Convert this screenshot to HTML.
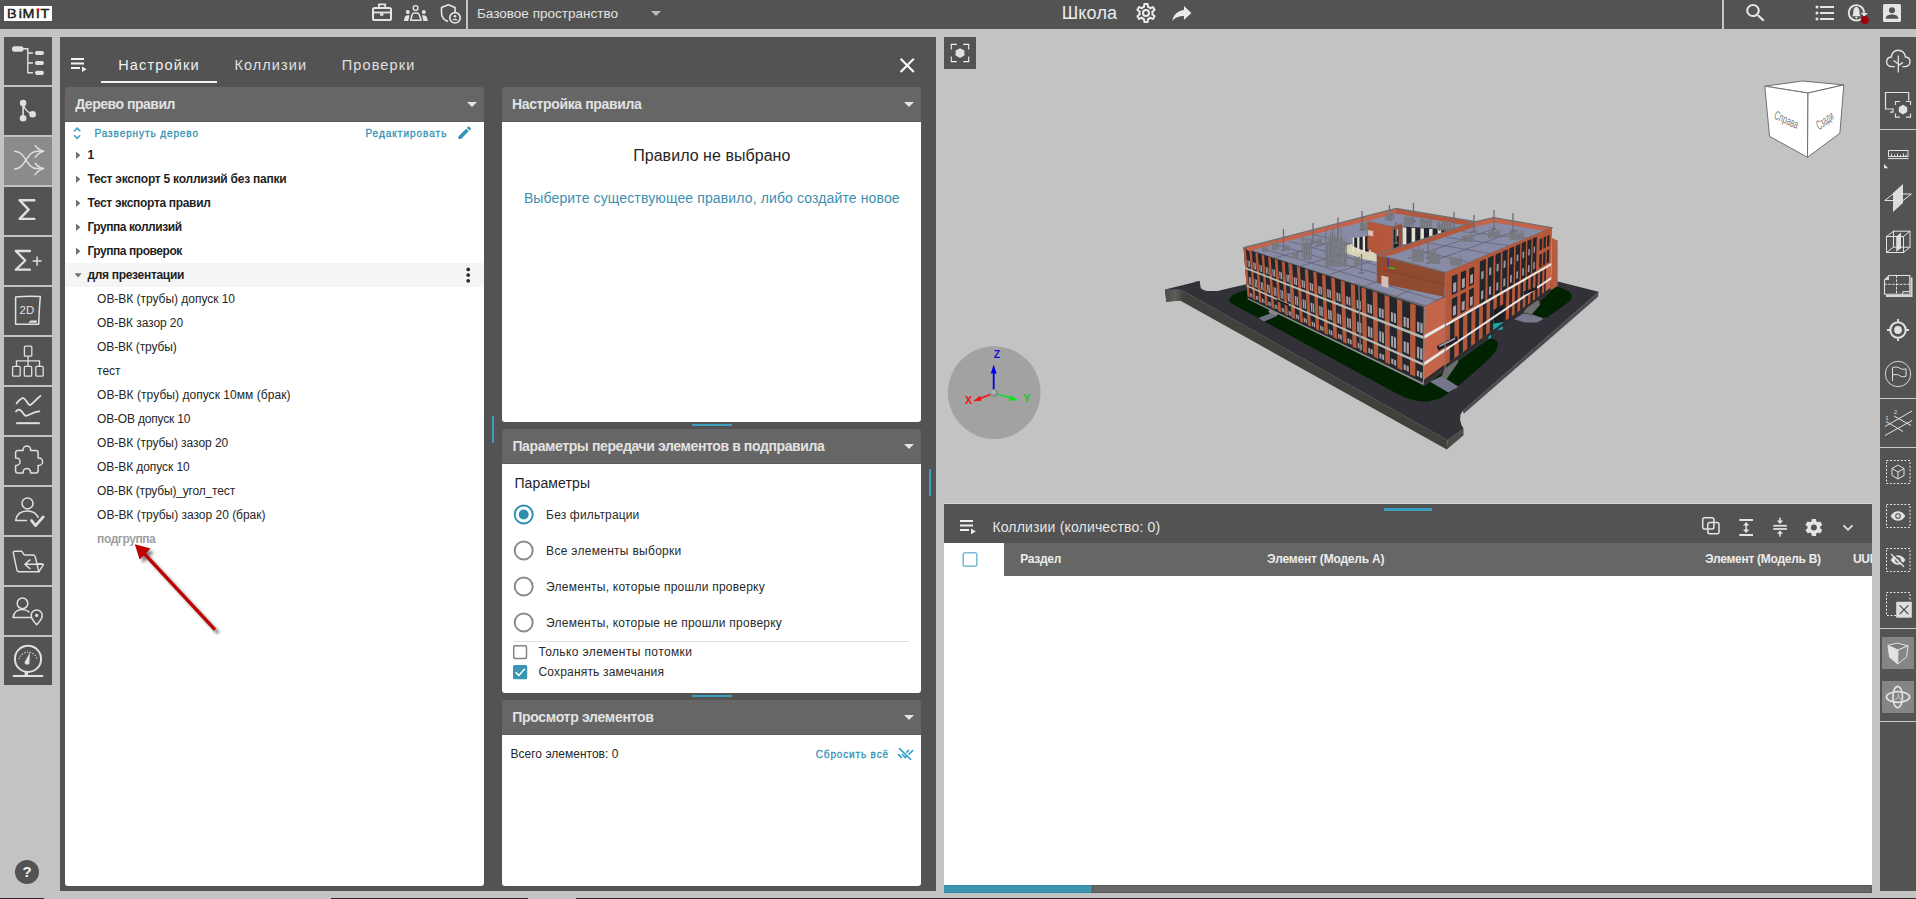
<!DOCTYPE html>
<html lang="ru">
<head>
<meta charset="utf-8">
<title>BIMIT</title>
<style>
html,body{margin:0;padding:0;}
body{width:1916px;height:899px;overflow:hidden;background:#c3c3c3;font-family:"Liberation Sans",sans-serif;}
#app{position:relative;width:1916px;height:899px;overflow:hidden;background:#c3c3c3;}
#app div,#app span,#app svg{position:absolute;box-sizing:border-box;}
.t{white-space:nowrap;display:block;}
.dk{background:#535353;}
.hd{background:#666666;border-radius:3px 3px 0 0;border-bottom:1px solid #5a5a5a;}
.wh{background:#fff;border-radius:0 0 3px 3px;}
.sb{left:4px;width:48px;height:48px;background:#535353;}
.bl{background:#3c9dbd;}
.sep{left:1880px;width:36px;height:1px;background:#c9c9c9;}
svg{overflow:visible;}
</style>
</head>
<body>
<div id="app">
<!-- top bar -->
<div class="dk" style="left:0;top:0;width:1916px;height:29px;"></div>
<div style="left:466px;top:0;width:2px;height:29px;background:#c6c6c6;"></div>
<div style="left:1722px;top:0;width:2px;height:29px;background:#c6c6c6;"></div>
<!-- left sidebar buttons -->
<div class="sb" style="top:37px;"></div>
<div class="sb" style="top:87px;"></div>
<div class="sb" style="top:137px;background:#8b8b8b;"></div>
<div class="sb" style="top:187px;"></div>
<div class="sb" style="top:237px;"></div>
<div class="sb" style="top:287px;"></div>
<div class="sb" style="top:337px;"></div>
<div class="sb" style="top:387px;"></div>
<div class="sb" style="top:437px;"></div>
<div class="sb" style="top:487px;"></div>
<div class="sb" style="top:537px;"></div>
<div class="sb" style="top:587px;"></div>
<div class="sb" style="top:637px;"></div>
<!-- main left panel -->
<div class="dk" style="left:60px;top:37px;width:876px;height:854px;"></div>
<div style="left:101px;top:81px;width:116px;height:2px;background:#f2f2f2;"></div>
<!-- tree card -->
<div class="hd" style="left:65px;top:87px;width:419px;height:35px;"></div>
<div class="wh" style="left:65px;top:122px;width:419px;height:764px;"></div>
<div style="left:65px;top:263px;width:419px;height:24px;background:#f5f5f5;"></div>
<!-- card 1 -->
<div class="hd" style="left:502px;top:87px;width:419px;height:35px;"></div>
<div class="wh" style="left:502px;top:122px;width:419px;height:300px;"></div>
<!-- card 2 -->
<div class="hd" style="left:502px;top:429px;width:419px;height:35px;"></div>
<div class="wh" style="left:502px;top:464px;width:419px;height:229px;"></div>
<div style="left:514px;top:641px;width:395px;height:1px;background:#dedede;"></div>
<!-- card 3 -->
<div class="hd" style="left:502px;top:700px;width:419px;height:35px;"></div>
<div class="wh" style="left:502px;top:735px;width:419px;height:151px;"></div>
<!-- splitter handles -->
<div class="bl" style="left:692px;top:424px;width:40px;height:2px;"></div>
<div class="bl" style="left:692px;top:695px;width:40px;height:2px;"></div>
<div class="bl" style="left:492px;top:416px;width:2px;height:27px;"></div>
<div class="bl" style="left:929px;top:469px;width:2px;height:27px;"></div>
<!-- collisions panel -->
<div style="left:944px;top:503px;width:928px;height:1px;background:#d6d6d6;"></div>
<div class="dk" style="left:944px;top:504px;width:928px;height:39px;"></div>
<div style="left:944px;top:543px;width:928px;height:342px;background:#fff;"></div>
<div style="left:1004px;top:543px;width:868px;height:33px;background:#666666;"></div>
<div class="bl" style="left:1384px;top:508px;width:48px;height:3px;"></div>
<div style="left:944px;top:885px;width:148px;height:8px;background:#3d95b2;border:1px solid #2f88a7;border-left:none;"></div>
<div style="left:1092px;top:885px;width:780px;height:8px;background:#676767;border:1px solid #5a5a5a;"></div>
<!-- right toolbar -->
<div class="dk" style="left:1880px;top:37px;width:36px;height:854px;"></div>
<div class="sep" style="top:129px;"></div>
<div class="sep" style="top:398px;"></div>
<div class="sep" style="top:447px;"></div>
<div class="sep" style="top:628px;"></div>
<div class="sep" style="top:721px;"></div>
<div style="left:1882px;top:637px;width:32px;height:32px;background:#858585;"></div>
<div style="left:1882px;top:681px;width:32px;height:32px;background:#858585;"></div>
<!-- viewport fit button -->
<div class="dk" style="left:944px;top:37px;width:32px;height:32px;"></div>
<!-- bottom line -->
<div style="left:0;top:898px;width:44px;height:1px;background:#2a2a2a;"></div>
<div style="left:331px;top:898px;width:197px;height:1px;background:#2a2a2a;"></div>
<div style="left:576px;top:898px;width:1340px;height:1px;background:#2a2a2a;"></div>

<!-- left sidebar icons -->
<svg style="left:4px;top:37px" width="48" height="48" viewBox="0 0 48 48" fill="none" stroke="#e0e0e0" stroke-width="1.4">
<rect x="8" y="9.3" width="11.6" height="5.4" rx="2.7" fill="#e0e0e0" stroke="none"/>
<path d="M19 11.7H23.8V35.8H28.9M23.8 16H28.9M23.8 26H28.9"/>
<rect x="30.9" y="14" width="9.1" height="4.1" rx="2.05" fill="#e0e0e0" stroke="none"/>
<rect x="30.9" y="24" width="9.1" height="4.1" rx="2.05" fill="#e0e0e0" stroke="none"/>
<rect x="30.9" y="33.8" width="9.1" height="4.1" rx="2.05" fill="#e0e0e0" stroke="none"/>
</svg>
<svg style="left:4px;top:87px" width="48" height="48" viewBox="0 0 48 48" fill="none" stroke="#e0e0e0" stroke-width="1.6">
<circle cx="19.1" cy="16" r="3.3" fill="#e0e0e0" stroke="none"/>
<circle cx="19.1" cy="31.3" r="3.3" fill="#e0e0e0" stroke="none"/>
<circle cx="28.6" cy="27.2" r="3.3" fill="#e0e0e0" stroke="none"/>
<path d="M19.1 16V31.3M19.1 16C20 22 23.5 25.5 28.6 27.2"/>
</svg>
<svg style="left:4px;top:137px" width="48" height="48" viewBox="0 0 48 48" fill="none" stroke="#dedede" stroke-width="1.5" stroke-linecap="round">
<path d="M10.6 14.2C22 14.2 22 31.8 33 31.6H39.6M10.6 31.9C22 31.9 22 14.2 33 14.2H39.6"/>
<path d="M31.2 8.8C33.5 11.8 36 13.4 39.8 14.2C36 15 33.5 17 31.2 20.2M31.2 26.2C33.5 29.2 36 30.8 39.8 31.6C36 32.4 33.5 34.4 31.2 37.6"/>
</svg>
<svg style="left:4px;top:187px" width="48" height="48" viewBox="0 0 48 48" fill="none" stroke="#e0e0e0" stroke-width="2.4" stroke-linecap="round" stroke-linejoin="round">
<path d="M30.3 13.2H15.6L24.6 22.6L15.6 31.9H30.3"/>
</svg>
<svg style="left:4px;top:237px" width="48" height="48" viewBox="0 0 48 48" fill="none" stroke="#e0e0e0" stroke-width="2.3" stroke-linecap="round" stroke-linejoin="round">
<path d="M26 14H11.8L21.2 23.5L11.8 32.7H26"/>
<path d="M28.6 24.1H37.6M33.1 19.6V28.8" stroke-width="1.5" stroke-linecap="butt"/>
</svg>
<svg style="left:4px;top:287px" width="48" height="48" viewBox="0 0 48 48" fill="none" stroke="#e0e0e0" stroke-width="1.5" stroke-linejoin="round">
<path d="M11.6 9.9C20 9.2 28 9 36.4 9.6C35.4 18 35 28 34.7 37.2H11.6Z"/>
<path d="M24.4 35.8L26.4 33.5H32.8V35.8Z" fill="#e0e0e0" stroke="none"/>
<text x="15.6" y="26.8" font-family="Liberation Sans, sans-serif" font-size="11.5" fill="#e0e0e0" stroke="none" textLength="14.6" lengthAdjust="spacingAndGlyphs">2D</text>
</svg>
<svg style="left:4px;top:337px" width="48" height="48" viewBox="0 0 48 48" fill="none" stroke="#e0e0e0" stroke-width="1.3">
<rect x="20.4" y="9.2" width="7.4" height="10" rx="1"/>
<rect x="8.6" y="29.4" width="7.6" height="9.8" rx="1"/>
<rect x="20.3" y="29.4" width="7.4" height="9.8" rx="1"/>
<rect x="31.8" y="29.4" width="7.4" height="9.8" rx="1"/>
<path d="M24.1 19.2V29.4M12.5 29.4V23.8H35.5V29.4"/>
</svg>
<svg style="left:4px;top:387px" width="48" height="48" viewBox="0 0 48 48" fill="none" stroke="#e0e0e0" stroke-width="1.8" stroke-linecap="round" stroke-linejoin="round">
<path d="M12.6 16.3C15 13.5 17 11 19.4 11.2C22 11.6 23.5 17.8 25.8 18C28 18 32 12 36.4 9"/>
<path d="M12 24.6C13 23 14.5 22.3 16 22.8C18 23.6 19.6 28.8 22 28.9C25 28.8 29 24.6 35.4 24.4"/>
<path d="M12.2 36.2H35.8" stroke-linecap="butt" stroke-width="2"/>
</svg>
<svg style="left:4px;top:437px" width="48" height="48" viewBox="0 0 48 48" fill="none" stroke="#e0e0e0" stroke-width="1" stroke-linejoin="round">
<g transform="translate(7.1 4.4) scale(1.5)">
<path d="M3 7.5a1.5 1.5 0 0 1 1.5-1.5H8V5.5a2.5 2.5 0 0 1 5 0V6H16.5a1.5 1.5 0 0 1 1.5 1.5V11H18.5a2.5 2.5 0 0 1 0 5H18V19.5a1.5 1.5 0 0 1-1.5 1.5H13V20.5a2.5 2.5 0 0 0-5 0V21H4.5a1.5 1.5 0 0 1-1.5-1.5V16H3.5a2.5 2.5 0 0 0 0-5H3Z"/>
</g>
</svg>
<svg style="left:4px;top:487px" width="48" height="48" viewBox="0 0 48 48" fill="none" stroke="#e0e0e0" stroke-width="1.5" stroke-linecap="round" stroke-linejoin="round">
<circle cx="23.5" cy="16.4" r="5.5"/>
<path d="M22.4 33.5H11.6C12.5 27 17 23.9 23.4 23.9C28.5 23.9 32.5 26.6 34.2 30.4"/>
<path d="M27.6 33.6L31.6 38.6L39.2 29.9" stroke-width="2.8"/>
</svg>
<svg style="left:4px;top:537px" width="48" height="48" viewBox="0 0 48 48" fill="none" stroke="#e0e0e0" stroke-width="1.4" stroke-linecap="round" stroke-linejoin="round">
<path d="M9.2 15.4C9.2 14.6 9.8 14.4 11 14.3H17.4C18.6 14.4 19.4 17.8 20.8 18H29.6C30.6 18.2 31 19 31.4 20.5L34.8 34.8H14.8C13.8 34.8 13.2 34 12.9 33L9.2 15.4Z"/>
<path d="M34.8 34.8L39.2 28.2C39.5 27.4 39 27 38 26.9L32.6 26.7"/>
<path d="M38.4 27.3H21M26 22.9L20.8 27.3L26 31.6"/>
</svg>
<svg style="left:4px;top:587px" width="48" height="48" viewBox="0 0 48 48" fill="none" stroke="#e0e0e0" stroke-width="1.5" stroke-linecap="round" stroke-linejoin="round">
<circle cx="18.5" cy="16.4" r="5.3"/>
<path d="M26.4 30.5H9C10 25.5 13.5 22.6 18 22.6C21 22.6 23.4 23.6 25 25"/>
<path d="M32.7 37.6C29.5 34.4 27.2 31.6 27.2 28.4A5.5 5.5 0 0 1 38.2 28.4C38.2 31.6 35.9 34.4 32.7 37.6Z"/>
<circle cx="32.7" cy="28.4" r="1.6" fill="#e0e0e0" stroke="none"/>
</svg>
<svg style="left:4px;top:637px" width="48" height="48" viewBox="0 0 48 48" fill="none" stroke="#e0e0e0" stroke-width="2">
<circle cx="24" cy="21.9" r="13.1"/>
<path d="M22.3 35V38.5" stroke-width="3.4"/>
<path d="M8.8 39H39.2" stroke-width="2.1"/>
<path d="M14.9 22.2A9.4 9.4 0 0 1 33.1 22.2" stroke-width="1.3" stroke-dasharray="1.3 1.5" stroke="#cfcfcf"/>
<path d="M25.9 15.2L25.4 26.6C25 28.3 21 28 20.4 25.8Z" fill="#e0e0e0" stroke="none"/>
</svg>
<!-- help button -->
<div style="left:15px;top:860px;width:24px;height:24px;border-radius:12px;background:#535353;"></div>
<span class="t" style="left:22.4px;top:864px;font-size:15px;line-height:16px;font-weight:700;color:#f4f4f4;">?</span>

<!-- logo -->
<div style="left:4px;top:6px;width:48px;height:15px;background:#fff;"></div>
<svg style="left:4px;top:6px" width="48" height="15" viewBox="0 0 48 15">
<g transform="scale(1.2 1)"><text x="2.45 12.35 15.4 26.9 30.5" y="11.8" font-family="Liberation Sans, sans-serif" font-size="12" fill="#1c1c1c" stroke="#1c1c1c" stroke-width=".42">BiMiT</text></g>
<rect x="32.6" y="2.6" width="2.7" height="2.3" fill="#ff0000"/>
<rect x="5.9" y="3.4" width=".9" height="8" fill="#fff"/>
</svg>
<!-- briefcase -->
<svg style="left:360px;top:0" width="120" height="29" viewBox="360 0 120 29" fill="none" stroke="#e4e4e4">
<rect x="373" y="7.9" width="18" height="12.1" rx="1.6" stroke-width="2"/>
<path d="M378.9 7.9V4.4H385.2V7.9" stroke-width="1.8" stroke-linejoin="round"/>
<path d="M373 12.5H391" stroke-width="1.8"/>
<rect x="380" y="13.2" width="3.4" height="2.5" fill="#e4e4e4" stroke="none"/>
<!-- group -->
<circle cx="415.6" cy="8" r="2.4" stroke-width="1.4"/>
<circle cx="407.8" cy="11.9" r="2" fill="#e4e4e4" stroke="none"/>
<circle cx="423.8" cy="11.9" r="2" fill="#e4e4e4" stroke="none"/>
<path d="M410.6 20.3L412.2 14.6C412.6 13.4 413.4 13 414.4 13H416.9C417.9 13 418.7 13.4 419.1 14.6L421.2 20.3Z" stroke-width="1.5" stroke-linejoin="round"/>
<path d="M403.8 20.9L404.8 17C405.3 15.6 407 15.2 409.6 15.2L408.2 20.9Z" fill="#e4e4e4" stroke="none"/>
<path d="M427.8 20.9L426.8 17C426.3 15.6 424.6 15.2 422 15.2L423.4 20.9Z" fill="#e4e4e4" stroke="none"/>
<!-- shield -->
<path d="M455.1 12V7.6L448.3 4.7L441.5 7.6V12.4C441.5 16.8 444.2 20 448 21.4" stroke-width="1.6" stroke-linejoin="round"/>
<circle cx="455" cy="17.8" r="5.2" stroke-width="1.7" fill="#535353"/>
<circle cx="455" cy="16.2" r="1.25" fill="#e4e4e4" stroke="none"/>
<path d="M452.5 20.2C452.5 18.2 457.5 18.2 457.5 20.2Z" fill="#e4e4e4" stroke="none"/>
</svg>
<!-- workspace dropdown triangle -->
<svg style="left:651px;top:11px" width="10" height="5" viewBox="0 0 10 5"><path d="M0 0H10L5 5Z" fill="#bcbcbc"/></svg>
<!-- gear outline -->
<svg style="left:1134px;top:1px" width="24" height="24" viewBox="0 0 24 24"><path fill="#ececec" d="M12,8A4,4 0 0,1 16,12A4,4 0 0,1 12,16A4,4 0 0,1 8,12A4,4 0 0,1 12,8M12,10A2,2 0 0,0 10,12A2,2 0 0,0 12,14A2,2 0 0,0 14,12A2,2 0 0,0 12,10M10,22C9.75,22 9.54,21.82 9.5,21.58L9.13,18.93C8.5,18.68 7.96,18.34 7.44,17.94L4.95,18.95C4.73,19.03 4.46,18.95 4.34,18.73L2.34,15.27C2.21,15.05 2.27,14.78 2.46,14.63L4.57,12.97L4.5,12L4.57,11L2.46,9.37C2.27,9.22 2.21,8.95 2.34,8.73L4.34,5.27C4.46,5.05 4.73,4.96 4.95,5.05L7.44,6.05C7.96,5.66 8.5,5.32 9.13,5.07L9.5,2.42C9.54,2.18 9.75,2 10,2H14C14.25,2 14.46,2.18 14.5,2.42L14.87,5.07C15.5,5.32 16.04,5.66 16.56,6.05L19.05,5.05C19.27,4.96 19.54,5.05 19.66,5.27L21.66,8.73C21.79,8.95 21.73,9.22 21.54,9.37L19.43,11L19.5,12L19.43,13L21.54,14.63C21.73,14.78 21.79,15.05 21.66,15.27L19.66,18.73C19.54,18.95 19.27,19.04 19.05,18.95L16.56,17.95C16.04,18.34 15.5,18.68 14.87,18.93L14.5,21.58C14.46,21.82 14.25,22 14,22H10M11.25,4L10.88,6.61C9.68,6.86 8.62,7.5 7.85,8.39L5.44,7.35L4.69,8.65L6.8,10.2C6.4,11.37 6.4,12.64 6.8,13.8L4.68,15.36L5.43,16.66L7.86,15.62C8.63,16.5 9.68,17.14 10.87,17.38L11.24,20H12.76L13.13,17.39C14.32,17.14 15.37,16.5 16.14,15.62L18.57,16.66L19.32,15.36L17.2,13.81C17.6,12.64 17.6,11.37 17.2,10.2L19.31,8.65L18.56,7.35L16.15,8.39C15.38,7.5 14.32,6.86 13.12,6.62L12.75,4H11.25Z"/></svg>
<!-- share -->
<svg style="left:1169px;top:0.6px" width="26" height="24" viewBox="0 0 26 24"><path transform="scale(1.067 1)" fill="#ececec" d="M21,12L14,5V9C7,10 4,15 3,20C5.5,16.5 9,14.9 14,14.9V19L21,12Z"/></svg>
<!-- search -->
<svg style="left:1743.4px;top:1.2px" width="26" height="26" viewBox="0 0 26 26"><path transform="scale(1.05 1)" fill="#e6e6e6" d="M9.5,3A6.5,6.5 0 0,1 16,9.5C16,11.11 15.41,12.59 14.44,13.73L14.71,14H15.5L20.5,19L19,20.5L14,15.5V14.71L13.73,14.44C12.59,15.41 11.11,16 9.5,16A6.5,6.5 0 0,1 3,9.5A6.5,6.5 0 0,1 9.5,3M9.5,5C7,5 5,7 5,9.5C5,12 7,14 9.5,14C12,14 14,12 14,9.5C14,7 12,5 9.5,5Z"/></svg>
<!-- list -->
<svg style="left:1812.5px;top:0.6px" width="24" height="24" viewBox="0 0 24 24"><path fill="#e6e6e6" d="M7,5H21V7H7V5M7,13V11H21V13H7M4,4.5A1.5,1.5 0 0,1 5.5,6A1.5,1.5 0 0,1 4,7.5A1.5,1.5 0 0,1 2.5,6A1.5,1.5 0 0,1 4,4.5M4,10.5A1.5,1.5 0 0,1 5.5,12A1.5,1.5 0 0,1 4,13.5A1.5,1.5 0 0,1 2.5,12A1.5,1.5 0 0,1 4,10.5M7,19V17H21V19H7M4,16.5A1.5,1.5 0 0,1 5.5,18A1.5,1.5 0 0,1 4,19.5A1.5,1.5 0 0,1 2.5,18A1.5,1.5 0 0,1 4,16.5Z"/></svg>
<!-- bell / user -->
<svg style="left:1840px;top:0" width="76" height="29" viewBox="1840 0 76 29" fill="none">
<path d="M1864.1 12.600A7.700 7.700 0 1 0 1861.500 18.600" stroke="#e6e6e6" stroke-width="1.900"/>
<path d="M1860.600 12.700L1867.800 13.100L1864.200 16.500Z" fill="#e6e6e6"/>
<path d="M1851.900 16.200C1853.300 15 1853.300 13.400 1853.300 11.600C1853.300 8.800 1854.600 7 1856.400 6.800C1858.200 7 1859.500 8.800 1859.500 11.600C1859.500 13.400 1859.500 15 1860.900 16.200Z" fill="#e6e6e6"/>
<circle cx="1856.400" cy="17.500" r="1.100" fill="#e6e6e6"/>
<circle cx="1864.8" cy="20" r="4" fill="#a0000c"/>
<rect x="1883" y="4" width="18" height="18" rx="1.6" fill="#e4e4e4"/>
<circle cx="1892" cy="10.2" r="3" fill="#535353"/>
<path d="M1885.8 18.8C1885.8 15 1889.5 14.4 1892 14.4C1894.500 14.4 1898.200 15 1898.200 18.800Z" fill="#535353"/>
</svg>

<!-- right toolbar icons -->
<svg style="left:1880px;top:37px" width="36" height="690" viewBox="1880 37 36 690" fill="none" stroke="#e2e2e2" stroke-width="1.2">
<!-- cloud tree -->
<path d="M1894.800 66.600H1891.600C1888.600 66.600 1886.600 64.400 1886.600 61.800C1886.600 59 1888.800 57.200 1891.400 57C1891.600 53 1894.600 50.200 1898.300 50.200C1902 50.200 1905 53 1905.400 57C1908 57.200 1910 59.200 1910 61.800C1910 64.400 1908 66.600 1905 66.600H1902.400" stroke-width="1.400"/>
<path d="M1898.300 55.500V72.600M1893.500 60.400L1898.300 64M1898.300 65.600L1903 62.400" stroke-width="1.300"/>
<!-- screen focus -->
<path d="M1908.700 100.500V92.500H1885.500V109H1893V112.200H1890"/>
<path d="M1895.500 105V101.500H1900M1906 101.500H1910.500V105M1910.500 113.500V117.200H1906M1900 117.200H1895.500V113.500"/>
<path d="M1903 104.800L1907.200 107.200V112L1903 114.400L1898.800 112V107.200Z" fill="#e2e2e2" stroke="none"/>
<!-- ruler -->
<rect x="1888.500" y="150.500" width="19.500" height="6" stroke-width="1"/>
<path d="M1891.500 156.500V153.500M1894.500 156.500V154.500M1897.500 156.500V153.500M1900.500 156.500V154.500M1903.500 156.500V153.500M1906 156.500V154.500" stroke-width="1"/>
<path d="M1888 158.600H1908.500" stroke-width="1"/>
<path d="M1884 164V168.200H1888.200Z" fill="#e8e8e8" stroke="none"/>
<!-- section plane -->
<path d="M1903 184V203L1893 212V193Z" fill="#dcdcdc" stroke="none"/>
<path d="M1884.800 200.500L1893.200 194H1911.400L1903 200.500Z" stroke-width="1"/>
<!-- section box -->
<path d="M1896.200 251.800V236.500L1901 232.500V248.200Z" fill="#dcdcdc" stroke="none"/>
<g stroke-width="1"><rect x="1886.500" y="236.500" width="17" height="16"/><rect x="1893.500" y="231.200" width="16.500" height="16"/>
<path d="M1886.500 236.500L1893.500 231.200M1903.500 236.500L1910 231.200M1886.500 252.500L1893.500 247.200M1903.500 252.500L1910 247.200"/></g>
<!-- floor plan -->
<path d="M1886 296H1911.500V277.500" stroke-width="2" stroke="#d6d6d6"/>
<path d="M1889 275.500H1909.800V294.200H1884.500V280Z" stroke-width="1.100" fill="#535353"/>
<path d="M1884.500 280H1889V275.500Z" fill="#d6d6d6" stroke="none"/>
<path d="M1896.500 275.500V294.200M1884.500 284.300H1909.800" stroke-width="1" stroke-dasharray="2.600 1.200"/>
<path d="M1902.800 294.200V291.600H1909.800" stroke-width="1"/>
<!-- target -->
<circle cx="1898" cy="330" r="7.700" stroke-width="2"/>
<circle cx="1898" cy="330" r="3.900" fill="#e2e2e2" stroke="none"/>
<path d="M1898 319V322M1898 338V341M1887 330H1890M1906 330H1909" stroke-width="1.800"/>
<!-- flag -->
<circle cx="1898" cy="374" r="12.700" stroke-width=".9"/>
<path d="M1892.500 381V367.600C1896 366.600 1898 367 1899.800 368.200C1901.600 369.400 1903.600 369.600 1906 368.800V376.300C1903.600 377.100 1901.600 376.900 1899.800 375.700C1898 374.500 1896 374.100 1892.500 375.100" stroke-width="1"/>
<!-- grid lines -->
<path d="M1885 426.500L1912 411M1885 435.500L1912 420.500M1886 421.500L1903 431.500M1894 416L1911 425.500" stroke-width="1"/>
<text x="1885.400" y="419.800" font-family="Liberation Sans, sans-serif" font-size="5.500" fill="#e2e2e2" stroke="none">1</text>
<text x="1894" y="413.600" font-family="Liberation Sans, sans-serif" font-size="5.500" fill="#e2e2e2" stroke="none">2</text>
<!-- dashed boxes -->
<g stroke-width="1" stroke-dasharray="1.800 1.800" stroke="#f0f0f0">
<rect x="1886.500" y="460.500" width="23.500" height="23"/>
<rect x="1886.500" y="504.500" width="23.500" height="23"/>
<rect x="1886.500" y="548.500" width="23.500" height="23"/>
<path d="M1896 615.500H1886.500V592.500H1910V601.500"/>
</g>
<path d="M1898 465L1904 468.500V475.500L1898 479L1892 475.500V468.500ZM1898 472V479M1898 472L1892 468.500M1898 472L1904 468.500" stroke-width="1"/>
<!-- eye -->
<path d="M1890.600 516C1893 512.600 1895.400 511.200 1898 511.200C1900.600 511.200 1903 512.600 1905.400 516C1903 519.400 1900.600 520.800 1898 520.800C1895.400 520.800 1893 519.400 1890.600 516Z" fill="#e2e2e2" stroke="none"/>
<circle cx="1898" cy="516" r="2.300" fill="#e2e2e2" stroke="#535353" stroke-width="1.100"/>
<!-- eye off -->
<path d="M1890.600 560C1893 556.600 1895.400 555.200 1898 555.200C1900.600 555.200 1903 556.600 1905.400 560C1903 563.400 1900.600 564.800 1898 564.800C1895.400 564.800 1893 563.400 1890.600 560Z" fill="#e2e2e2" stroke="none"/>
<circle cx="1898" cy="560" r="2.300" fill="#e2e2e2" stroke="#535353" stroke-width="1.100"/>
<path d="M1892.300 553.200L1905.300 566" stroke="#535353" stroke-width="1.300"/>
<path d="M1891 554L1904 566.800" stroke="#e2e2e2" stroke-width="1.300"/>
<!-- X box -->
<rect x="1896.200" y="601.800" width="15.600" height="15.900" fill="#dedede" stroke="none"/>
<path d="M1899.600 605.400L1908.400 614.200M1908.400 605.400L1899.600 614.200" stroke="#4a4a4a" stroke-width="1.200"/>
<!-- cube button -->
<path d="M1887.900 645.300L1898 650L1897.700 664L1889.500 657.200Z" fill="#e2e2e2" stroke="#e2e2e2" stroke-width=".8" stroke-linejoin="round"/>
<path d="M1887.900 645.300L1897.400 643.200L1908 645.800L1898 650Z" fill="#7c7c7c" stroke="#e2e2e2" stroke-width="1" stroke-linejoin="round"/>
<path d="M1898 650L1908 645.800L1906.600 656.900L1897.700 664Z" fill="#858585" stroke="#e2e2e2" stroke-width="1" stroke-linejoin="round"/>
<!-- orbit button -->
<ellipse cx="1898" cy="697" rx="11.600" ry="5.300" stroke-width="1.700"/>
<ellipse cx="1897.700" cy="697" rx="4.800" ry="10.600" stroke-width="1.700"/>
<path d="M1898.400 693.800V696.800L1895.400 700M1898.400 696.800L1901.400 700" stroke-width=".8"/>
</svg>

<!-- 3D viewport -->
<svg style="left:944px;top:37px" width="928" height="466" viewBox="944 37 928 466" shape-rendering="geometricPrecision">
<path d="M1165.0 289.6L1166.3 301.7L1180.0 300.5L1446.8 449.4L1447.6 440.2L1182.5 290.6L1179.2 289.6Z" fill="#40413c"/>
<defs><linearGradient id="sg" x1="0" x2="1"><stop offset="0" stop-color="#4a4b47"/><stop offset=".55" stop-color="#5c5d58"/><stop offset="1" stop-color="#40413c"/></linearGradient></defs>
<path d="M1165.0 289.6L1166.3 301.7L1182.0 300.6L1184.0 291.4L1179.2 289.6Z" fill="url(#sg)"/>
<path d="M1446.8 449.4L1447.6 440.2L1463.5 428.5L1463.5 435.2Z" fill="#4a4a46"/>
<path d="M1598.5 291.7L1598.0 296.7L1464.0 413.6L1462.6 411.0Z" fill="#4c4c50"/>
<path d="M1194.2 281.7L1199.7 280.9L1200.5 287.9L1194.8 284.5Z" fill="#5b5b60"/>
<path d="M1165.0 289.6L1199.7 280.9L1200.5 287.9L1203.0 289.8L1206.8 290.9L1217.6 290.9L1230.1 287.9L1246.4 284.2L1556.8 281.3L1598.5 291.7L1462.6 411.0L1460.3 415.0L1460.1 420.2L1461.5 425.0L1463.5 428.5L1447.6 440.2L1182.5 290.6L1179.2 289.6Z" fill="#313137"/>
<path d="M1247.5 289.8L1238.5 292.5L1232.0 295.5L1228.9 299.2L1230.5 302.8L1234.3 305.0L1390.0 390.0L1405.0 397.5L1418.0 401.0L1428.0 401.5L1440.0 398.5L1452.0 391.0L1470.0 376.0L1490.0 358.0L1497.0 349.0L1498.0 343.0L1496.0 340.0L1491.0 338.5L1486.0 341.0L1424.0 386.5Z" fill="#002200"/>
<path d="M1258.5 318.0L1270.0 313.5L1276.0 316.5L1264.0 321.5Z" fill="#6f7082"/>
<path d="M1268.0 311.5L1274.0 307.0L1281.0 310.5L1276.0 316.5L1270.0 313.5Z" fill="#858585"/>
<path d="M1430.0 381.8L1441.8 376.0L1458.5 386.8L1448.4 392.6Z" fill="#75768a"/>
<path d="M1441.8 376.0L1450.5 354.0L1456.5 357.5L1458.5 362.0L1446.0 380.0Z" fill="#6c6c6c"/>
<path d="M1555.9 286.5L1563.0 288.5L1569.0 291.5L1571.8 295.1L1571.0 299.5L1566.0 304.0L1552.0 314.0L1546.7 317.6L1541.0 317.5L1532.6 314.3L1540.0 301.7Z" fill="#002200"/>
<path d="M1514.2 319.3L1523.4 313.4L1533.4 315.1L1541.0 317.5L1543.4 319.3L1536.7 322.6L1525.0 322.6Z" fill="#77788c"/>
<path d="M1532.6 299.2L1539.2 300.9L1540.0 305.1L1531.7 314.3L1523.4 312.6Z" fill="#6e6e6e"/>
<path d="M1243.5 247.6L1424.2 306.3L1423.4 384.2L1247.7 298.7Z" fill="#23272b"/>
<path d="M1243.6 248.6L1245.9 249.4L1249.8 297.5L1247.5 296.5Z" fill="#b4573a"/>
<path d="M1249.4 250.5L1251.7 251.3L1255.6 300.3L1253.2 299.2Z" fill="#b4573a"/>
<path d="M1255.3 252.5L1257.8 253.3L1261.6 303.2L1259.1 302.0Z" fill="#b4573a"/>
<path d="M1261.6 254.6L1264.1 255.4L1267.8 306.2L1265.3 305.0Z" fill="#b4573a"/>
<path d="M1268.1 256.7L1270.7 257.6L1274.3 309.3L1271.6 308.0Z" fill="#b4573a"/>
<path d="M1274.8 258.9L1277.6 259.8L1281.0 312.5L1278.3 311.2Z" fill="#b4573a"/>
<path d="M1281.8 261.2L1284.7 262.2L1288.0 315.9L1285.2 314.5Z" fill="#b4573a"/>
<path d="M1289.2 263.6L1292.2 264.6L1295.4 319.4L1292.4 318.0Z" fill="#b4573a"/>
<path d="M1296.8 266.1L1300.0 267.2L1303.0 323.1L1299.9 321.6Z" fill="#b4573a"/>
<path d="M1304.8 268.7L1308.1 269.8L1310.9 326.9L1307.7 325.3Z" fill="#b4573a"/>
<path d="M1313.2 271.5L1316.6 272.6L1319.3 330.9L1315.9 329.3Z" fill="#b4573a"/>
<path d="M1321.9 274.4L1325.5 275.5L1328.0 335.0L1324.4 333.4Z" fill="#b4573a"/>
<path d="M1331.1 277.4L1334.9 278.6L1337.1 339.4L1333.4 337.6Z" fill="#b4573a"/>
<path d="M1340.7 280.5L1344.7 281.8L1346.7 344.0L1342.8 342.1Z" fill="#b4573a"/>
<path d="M1350.8 283.9L1355.0 285.2L1356.7 348.8L1352.6 346.9Z" fill="#b4573a"/>
<path d="M1361.5 287.3L1365.9 288.8L1367.2 353.9L1362.9 351.8Z" fill="#b4573a"/>
<path d="M1372.7 291.0L1377.3 292.5L1378.3 359.2L1373.8 357.0Z" fill="#b4573a"/>
<path d="M1384.5 294.9L1389.4 296.5L1390.0 364.8L1385.2 362.5Z" fill="#b4573a"/>
<path d="M1397.0 299.0L1402.2 300.7L1402.3 370.7L1397.3 368.3Z" fill="#b4573a"/>
<path d="M1410.2 303.3L1415.7 305.1L1415.3 376.9L1410.0 374.4Z" fill="#b4573a"/>
<path d="M1247.4 260.1L1249.7 261.0L1250.2 267.5L1247.9 266.6Z" fill="#a39fa7"/>
<path d="M1248.3 260.5L1248.7 260.6L1249.2 267.2L1248.8 267.0Z" fill="#2c2f34"/>
<path d="M1248.7 276.7L1251.0 277.7L1251.6 285.4L1249.3 284.4Z" fill="#a39fa7"/>
<path d="M1249.6 277.1L1250.0 277.3L1250.7 285.0L1250.3 284.8Z" fill="#2c2f34"/>
<path d="M1250.0 292.8L1252.3 293.9L1252.6 297.7L1250.3 296.6Z" fill="#a39fa7"/>
<path d="M1250.9 293.2L1251.3 293.4L1251.6 297.2L1251.2 297.0Z" fill="#2c2f34"/>
<path d="M1253.2 262.2L1255.6 263.1L1256.1 269.8L1253.7 268.9Z" fill="#a39fa7"/>
<path d="M1254.2 262.6L1254.6 262.8L1255.1 269.4L1254.7 269.3Z" fill="#2c2f34"/>
<path d="M1254.5 279.1L1256.9 280.1L1257.5 288.0L1255.1 287.0Z" fill="#a39fa7"/>
<path d="M1255.5 279.6L1255.9 279.7L1256.5 287.6L1256.1 287.4Z" fill="#2c2f34"/>
<path d="M1255.8 295.5L1258.2 296.6L1258.5 300.5L1256.1 299.3Z" fill="#a39fa7"/>
<path d="M1256.8 295.9L1257.2 296.1L1257.5 300.0L1257.1 299.8Z" fill="#2c2f34"/>
<path d="M1259.3 264.4L1261.8 265.4L1262.3 272.2L1259.8 271.2Z" fill="#a39fa7"/>
<path d="M1260.3 264.8L1260.8 265.0L1261.3 271.8L1260.8 271.6Z" fill="#2c2f34"/>
<path d="M1260.6 281.7L1263.1 282.7L1263.7 290.7L1261.2 289.6Z" fill="#a39fa7"/>
<path d="M1261.6 282.1L1262.1 282.3L1262.6 290.2L1262.2 290.1Z" fill="#2c2f34"/>
<path d="M1261.8 298.3L1264.3 299.4L1264.6 303.4L1262.1 302.2Z" fill="#a39fa7"/>
<path d="M1262.9 298.8L1263.3 299.0L1263.6 302.9L1263.1 302.7Z" fill="#2c2f34"/>
<path d="M1265.6 266.7L1268.2 267.7L1268.7 274.6L1266.1 273.6Z" fill="#a39fa7"/>
<path d="M1266.7 267.1L1267.2 267.3L1267.7 274.2L1267.2 274.0Z" fill="#2c2f34"/>
<path d="M1266.9 284.3L1269.5 285.3L1270.1 293.5L1267.5 292.4Z" fill="#a39fa7"/>
<path d="M1268.0 284.7L1268.4 284.9L1269.0 293.0L1268.5 292.8Z" fill="#2c2f34"/>
<path d="M1268.1 301.2L1270.7 302.4L1271.0 306.4L1268.4 305.2Z" fill="#a39fa7"/>
<path d="M1269.2 301.7L1269.6 301.9L1269.9 305.9L1269.5 305.7Z" fill="#2c2f34"/>
<path d="M1272.2 269.1L1274.9 270.1L1275.4 277.2L1272.7 276.1Z" fill="#a39fa7"/>
<path d="M1273.3 269.5L1273.8 269.7L1274.3 276.7L1273.8 276.6Z" fill="#2c2f34"/>
<path d="M1273.5 287.0L1276.1 288.1L1276.7 296.4L1274.0 295.2Z" fill="#a39fa7"/>
<path d="M1274.6 287.4L1275.0 287.6L1275.6 295.9L1275.1 295.7Z" fill="#2c2f34"/>
<path d="M1274.6 304.2L1277.3 305.5L1277.6 309.6L1274.9 308.3Z" fill="#a39fa7"/>
<path d="M1275.7 304.7L1276.2 305.0L1276.5 309.0L1276.0 308.8Z" fill="#2c2f34"/>
<path d="M1279.1 271.6L1281.9 272.6L1282.4 279.8L1279.6 278.8Z" fill="#a39fa7"/>
<path d="M1280.3 272.0L1280.7 272.2L1281.2 279.4L1280.7 279.2Z" fill="#2c2f34"/>
<path d="M1280.3 289.8L1283.1 291.0L1283.6 299.4L1280.8 298.2Z" fill="#a39fa7"/>
<path d="M1281.4 290.3L1281.9 290.5L1282.5 298.9L1282.0 298.7Z" fill="#2c2f34"/>
<path d="M1281.4 307.4L1284.2 308.7L1284.5 312.8L1281.7 311.5Z" fill="#a39fa7"/>
<path d="M1282.6 307.9L1283.0 308.1L1283.3 312.3L1282.8 312.1Z" fill="#2c2f34"/>
<path d="M1286.2 274.2L1289.2 275.3L1289.6 282.6L1286.7 281.5Z" fill="#a39fa7"/>
<path d="M1287.5 274.6L1288.0 274.8L1288.4 282.1L1287.9 281.9Z" fill="#2c2f34"/>
<path d="M1287.4 292.7L1290.3 294.0L1290.8 302.6L1287.9 301.3Z" fill="#a39fa7"/>
<path d="M1288.6 293.2L1289.1 293.4L1289.6 302.1L1289.1 301.8Z" fill="#2c2f34"/>
<path d="M1288.5 310.7L1291.4 312.0L1291.6 316.3L1288.7 314.9Z" fill="#a39fa7"/>
<path d="M1289.7 311.2L1290.2 311.4L1290.4 315.7L1289.9 315.4Z" fill="#2c2f34"/>
<path d="M1293.7 276.9L1296.8 278.0L1297.2 285.5L1294.1 284.3Z" fill="#a39fa7"/>
<path d="M1295.0 277.3L1295.5 277.5L1295.9 285.0L1295.4 284.8Z" fill="#2c2f34"/>
<path d="M1294.8 295.8L1297.9 297.1L1298.3 305.9L1295.3 304.5Z" fill="#a39fa7"/>
<path d="M1296.1 296.3L1296.6 296.5L1297.1 305.3L1296.5 305.1Z" fill="#2c2f34"/>
<path d="M1295.8 314.1L1298.9 315.5L1299.1 319.8L1296.1 318.4Z" fill="#a39fa7"/>
<path d="M1297.1 314.6L1297.6 314.9L1297.9 319.2L1297.3 319.0Z" fill="#2c2f34"/>
<path d="M1301.5 279.7L1304.7 280.9L1305.1 288.5L1301.9 287.3Z" fill="#a39fa7"/>
<path d="M1302.8 280.2L1303.4 280.4L1303.8 288.0L1303.2 287.8Z" fill="#2c2f34"/>
<path d="M1302.5 299.0L1305.7 300.3L1306.2 309.3L1303.0 307.9Z" fill="#a39fa7"/>
<path d="M1303.8 299.5L1304.4 299.8L1304.9 308.7L1304.3 308.5Z" fill="#2c2f34"/>
<path d="M1303.5 317.6L1306.7 319.1L1306.9 323.5L1303.8 322.0Z" fill="#a39fa7"/>
<path d="M1304.8 318.2L1305.4 318.5L1305.6 322.9L1305.1 322.6Z" fill="#2c2f34"/>
<path d="M1309.6 282.6L1313.0 283.9L1313.4 291.7L1310.0 290.4Z" fill="#a39fa7"/>
<path d="M1311.0 283.1L1311.6 283.4L1312.0 291.1L1311.4 290.9Z" fill="#2c2f34"/>
<path d="M1310.6 302.4L1313.9 303.7L1314.4 312.9L1311.1 311.4Z" fill="#a39fa7"/>
<path d="M1312.0 302.9L1312.6 303.2L1313.0 312.3L1312.4 312.0Z" fill="#2c2f34"/>
<path d="M1311.6 321.4L1314.9 322.9L1315.1 327.4L1311.8 325.8Z" fill="#a39fa7"/>
<path d="M1312.9 322.0L1313.5 322.3L1313.7 326.7L1313.1 326.5Z" fill="#2c2f34"/>
<path d="M1318.2 285.7L1321.7 287.0L1322.0 295.0L1318.5 293.6Z" fill="#a39fa7"/>
<path d="M1319.6 286.3L1320.2 286.5L1320.6 294.4L1320.0 294.2Z" fill="#2c2f34"/>
<path d="M1319.1 305.8L1322.6 307.3L1323.0 316.7L1319.5 315.1Z" fill="#a39fa7"/>
<path d="M1320.5 306.4L1321.1 306.7L1321.5 316.0L1320.9 315.8Z" fill="#2c2f34"/>
<path d="M1319.9 325.2L1323.4 326.9L1323.6 331.5L1320.1 329.8Z" fill="#a39fa7"/>
<path d="M1321.4 325.9L1322.0 326.2L1322.2 330.8L1321.6 330.5Z" fill="#2c2f34"/>
<path d="M1327.1 289.0L1330.8 290.3L1331.1 298.4L1327.4 297.0Z" fill="#a39fa7"/>
<path d="M1328.6 289.5L1329.2 289.7L1329.6 297.9L1328.9 297.6Z" fill="#2c2f34"/>
<path d="M1327.9 309.5L1331.6 311.0L1331.9 320.6L1328.3 319.0Z" fill="#a39fa7"/>
<path d="M1329.4 310.1L1330.0 310.4L1330.4 319.9L1329.8 319.6Z" fill="#2c2f34"/>
<path d="M1328.7 329.3L1332.3 331.0L1332.5 335.7L1328.9 334.0Z" fill="#a39fa7"/>
<path d="M1330.2 330.0L1330.8 330.3L1331.0 335.0L1330.4 334.7Z" fill="#2c2f34"/>
<path d="M1336.4 292.3L1340.3 293.7L1340.6 302.1L1336.7 300.6Z" fill="#a39fa7"/>
<path d="M1338.0 292.9L1338.7 293.2L1339.0 301.5L1338.3 301.2Z" fill="#2c2f34"/>
<path d="M1337.2 313.3L1341.0 314.9L1341.3 324.7L1337.5 323.0Z" fill="#a39fa7"/>
<path d="M1338.8 314.0L1339.4 314.3L1339.8 324.0L1339.1 323.7Z" fill="#2c2f34"/>
<path d="M1337.9 333.6L1341.7 335.3L1341.9 340.1L1338.1 338.3Z" fill="#a39fa7"/>
<path d="M1339.5 334.3L1340.1 334.6L1340.3 339.4L1339.6 339.1Z" fill="#2c2f34"/>
<path d="M1346.2 295.9L1350.3 297.4L1350.5 305.9L1346.5 304.3Z" fill="#a39fa7"/>
<path d="M1347.9 296.5L1348.6 296.7L1348.9 305.2L1348.2 305.0Z" fill="#2c2f34"/>
<path d="M1346.9 317.4L1350.9 319.0L1351.2 329.0L1347.2 327.3Z" fill="#a39fa7"/>
<path d="M1348.6 318.1L1349.3 318.3L1349.5 328.3L1348.8 328.0Z" fill="#2c2f34"/>
<path d="M1347.5 338.1L1351.5 339.9L1351.7 344.8L1347.7 342.9Z" fill="#a39fa7"/>
<path d="M1349.2 338.8L1349.9 339.1L1350.0 344.0L1349.3 343.7Z" fill="#2c2f34"/>
<path d="M1356.6 299.6L1360.8 301.2L1361.0 309.9L1356.8 308.3Z" fill="#a39fa7"/>
<path d="M1358.3 300.2L1359.1 300.5L1359.3 309.2L1358.5 308.9Z" fill="#2c2f34"/>
<path d="M1357.1 321.6L1361.3 323.3L1361.6 333.6L1357.4 331.7Z" fill="#a39fa7"/>
<path d="M1358.8 322.3L1359.6 322.6L1359.8 332.8L1359.1 332.5Z" fill="#2c2f34"/>
<path d="M1357.6 342.7L1361.8 344.7L1361.9 349.7L1357.8 347.7Z" fill="#a39fa7"/>
<path d="M1359.4 343.5L1360.1 343.9L1360.2 348.9L1359.5 348.5Z" fill="#2c2f34"/>
<path d="M1367.4 303.5L1371.9 305.2L1372.1 314.1L1367.6 312.4Z" fill="#a39fa7"/>
<path d="M1369.3 304.2L1370.0 304.5L1370.2 313.4L1369.4 313.1Z" fill="#2c2f34"/>
<path d="M1367.8 326.0L1372.3 327.9L1372.5 338.3L1368.0 336.4Z" fill="#a39fa7"/>
<path d="M1369.7 326.8L1370.5 327.1L1370.6 337.5L1369.9 337.2Z" fill="#2c2f34"/>
<path d="M1368.3 347.7L1372.7 349.7L1372.8 354.8L1368.4 352.8Z" fill="#a39fa7"/>
<path d="M1370.1 348.5L1370.8 348.9L1370.9 354.0L1370.2 353.6Z" fill="#2c2f34"/>
<path d="M1378.8 307.7L1383.6 309.4L1383.7 318.5L1379.0 316.7Z" fill="#a39fa7"/>
<path d="M1380.8 308.4L1381.6 308.7L1381.7 317.8L1380.9 317.5Z" fill="#2c2f34"/>
<path d="M1379.2 330.7L1383.8 332.7L1384.0 343.4L1379.3 341.3Z" fill="#a39fa7"/>
<path d="M1381.1 331.5L1381.9 331.8L1382.0 342.5L1381.2 342.2Z" fill="#2c2f34"/>
<path d="M1379.5 352.9L1384.1 355.0L1384.1 360.3L1379.5 358.1Z" fill="#a39fa7"/>
<path d="M1381.4 353.7L1382.2 354.1L1382.2 359.3L1381.4 359.0Z" fill="#2c2f34"/>
<path d="M1390.9 312.0L1395.9 313.8L1396.0 323.2L1391.0 321.3Z" fill="#a39fa7"/>
<path d="M1393.0 312.8L1393.8 313.1L1393.9 322.4L1393.0 322.1Z" fill="#2c2f34"/>
<path d="M1391.1 335.6L1396.0 337.7L1396.1 348.7L1391.1 346.5Z" fill="#a39fa7"/>
<path d="M1393.1 336.5L1394.0 336.8L1394.0 347.8L1393.2 347.4Z" fill="#2c2f34"/>
<path d="M1391.2 358.3L1396.1 360.6L1396.1 366.0L1391.3 363.6Z" fill="#a39fa7"/>
<path d="M1393.2 359.3L1394.1 359.7L1394.1 365.0L1393.3 364.6Z" fill="#2c2f34"/>
<path d="M1403.6 316.6L1408.9 318.6L1408.9 328.2L1403.6 326.2Z" fill="#a39fa7"/>
<path d="M1405.8 317.4L1406.7 317.8L1406.7 327.3L1405.8 327.0Z" fill="#2c2f34"/>
<path d="M1403.7 340.9L1408.9 343.0L1408.9 354.3L1403.7 352.0Z" fill="#a39fa7"/>
<path d="M1405.8 341.7L1406.7 342.1L1406.7 353.3L1405.8 352.9Z" fill="#2c2f34"/>
<path d="M1403.7 364.1L1408.8 366.5L1408.8 372.0L1403.7 369.5Z" fill="#a39fa7"/>
<path d="M1405.8 365.1L1406.7 365.5L1406.7 371.0L1405.8 370.5Z" fill="#2c2f34"/>
<path d="M1417.1 321.5L1422.7 323.5L1422.6 333.4L1417.1 331.3Z" fill="#a39fa7"/>
<path d="M1419.4 322.3L1420.4 322.7L1420.3 332.5L1419.3 332.2Z" fill="#2c2f34"/>
<path d="M1417.0 346.4L1422.5 348.7L1422.4 360.2L1416.9 357.8Z" fill="#a39fa7"/>
<path d="M1419.2 347.3L1420.2 347.7L1420.1 359.2L1419.1 358.8Z" fill="#2c2f34"/>
<path d="M1416.8 370.2L1422.3 372.7L1422.2 378.4L1416.8 375.8Z" fill="#a39fa7"/>
<path d="M1419.0 371.2L1420.0 371.7L1419.9 377.3L1419.0 376.8Z" fill="#2c2f34"/>
<path d="M1245.1 267.1L1423.9 336.3L1423.9 339.2L1245.3 269.0Z" fill="#b6b7b0"/>
<path d="M1246.6 284.8L1423.6 363.2L1423.6 365.9L1246.7 286.6Z" fill="#b6b7b0"/>
<path d="M1247.5 296.5L1423.4 380.8L1423.4 384.2L1247.7 298.7Z" fill="#2a2b2d"/>
<path d="M1247.6 298.0L1423.4 383.1L1423.4 385.1L1247.7 299.3Z" fill="#8f9093"/>
<path d="M1243.5 247.1L1424.2 305.5L1424.2 307.3L1243.6 248.2Z" fill="#6d6e72"/>
<path d="M1288.3 262.2L1289.2 262.5L1292.6 318.3L1291.7 317.9Z" fill="#7d7d7d"/>
<path d="M1358.2 284.9L1359.5 285.3L1361.0 351.2L1359.8 350.6Z" fill="#7d7d7d"/>
<path d="M1276.8 298.9L1288.7 304.2L1288.9 306.4L1276.9 301.1Z" fill="#1e2022"/>
<path d="M1424.2 306.3L1445.0 296.8L1445.0 368.0L1423.4 384.2Z" fill="#c4644a"/>
<path d="M1423.9 335.6L1445.0 323.6L1445.0 326.1L1423.9 338.3Z" fill="#e4e4e2"/>
<path d="M1423.6 362.6L1445.0 348.3L1445.0 350.8L1423.6 365.4Z" fill="#e4e4e2"/>
<path d="M1423.4 380.2L1445.0 364.3L1445.0 368.0L1423.4 384.2Z" fill="#2a2b2d"/>
<path d="M1243.5 247.6L1396.1 208.4L1475.2 221.7L1444.2 296.5L1425.5 305.8Z" fill="#888ba6"/>
<path d="M1244.5 247.6L1396.1 208.8L1396.3 213.6L1262.0 247.6L1249.0 251.6Z" fill="#c4644a"/>
<path d="M1396.1 208.8L1475.2 222.1L1473.0 226.6L1396.3 213.6Z" fill="#b4573a"/>
<path d="M1243.5 247.6L1396.1 208.4L1475.2 221.7" fill="none" stroke="#6e6f73" stroke-width="1.2"/>
<path d="M1272.1 258.7L1342.0 239.4" fill="none" stroke="#5d5f6c" stroke-width="0.7"/>
<path d="M1298.4 266.8L1368.1 245.9" fill="none" stroke="#5d5f6c" stroke-width="0.7"/>
<path d="M1326.8 275.5L1396.0 253.0" fill="none" stroke="#5d5f6c" stroke-width="0.7"/>
<path d="M1363.4 286.7L1431.6 262.0" fill="none" stroke="#5d5f6c" stroke-width="0.7"/>
<path d="M1395.3 296.5L1462.4 269.8" fill="none" stroke="#5d5f6c" stroke-width="0.7"/>
<path d="M1261.7 248.3L1437.6 300.5" fill="none" stroke="#5d5f6c" stroke-width="0.7"/>
<path d="M1275.6 244.7L1450.9 294.7" fill="none" stroke="#5d5f6c" stroke-width="0.7"/>
<path d="M1289.1 241.3L1463.5 289.2" fill="none" stroke="#5d5f6c" stroke-width="0.7"/>
<path d="M1302.0 237.9L1475.5 283.9" fill="none" stroke="#5d5f6c" stroke-width="0.7"/>
<path d="M1314.5 234.7L1487.0 278.9" fill="none" stroke="#5d5f6c" stroke-width="0.7"/>
<path d="M1344.1 246.4L1382.8 233.7L1382.8 252.4L1376.8 254.4L1376.8 261.8L1362.8 259.1L1344.1 252.4Z" fill="#d8d2b6"/>
<path d="M1352.0 238.6L1382.8 233.4L1382.8 252.2L1366.0 251.4L1352.0 246.0Z" fill="#20242a"/>
<path d="M1352.3 238.1L1354.2 237.8L1354.2 252.0L1352.3 252.1Z" fill="#e8e2d2"/>
<path d="M1357.2 237.3L1359.4 237.0L1359.4 252.0L1357.2 252.0Z" fill="#e8e2d2"/>
<path d="M1362.7 236.5L1365.1 236.1L1365.1 251.9L1362.7 251.9Z" fill="#e8e2d2"/>
<path d="M1368.8 235.6L1371.5 235.1L1371.5 251.8L1368.8 251.8Z" fill="#e8e2d2"/>
<path d="M1375.6 234.5L1378.7 234.0L1378.7 251.7L1375.6 251.7Z" fill="#e8e2d2"/>
<path d="M1402.8 226.4L1466.5 230.5L1447.0 239.2L1415.5 245.3L1402.8 245.7Z" fill="#20242a"/>
<path d="M1402.8 227.2L1406.4 227.4L1406.4 244.7L1402.8 244.5Z" fill="#e6e0d0"/>
<path d="M1411.6 227.8L1415.2 228.0L1415.2 245.2L1411.6 245.0Z" fill="#e6e0d0"/>
<path d="M1420.4 228.3L1423.9 228.6L1423.9 245.7L1420.4 245.5Z" fill="#e6e0d0"/>
<path d="M1429.1 228.9L1432.6 229.1L1432.6 246.2L1429.1 246.0Z" fill="#e6e0d0"/>
<path d="M1437.7 229.4L1441.2 229.7L1441.2 246.6L1437.7 246.4Z" fill="#e6e0d0"/>
<path d="M1446.2 230.0L1449.7 230.2L1449.7 247.1L1446.2 246.9Z" fill="#e6e0d0"/>
<path d="M1454.7 230.5L1458.1 230.7L1458.1 247.6L1454.7 247.4Z" fill="#e6e0d0"/>
<path d="M1367.4 221.0L1379.5 219.0L1402.1 223.7L1392.1 226.4Z" fill="#888ba6"/>
<path d="M1367.4 221.4L1392.1 226.4L1392.1 251.1L1376.8 254.4L1367.4 248.4Z" fill="#b4573a"/>
<path d="M1392.1 226.4L1402.1 223.7L1402.1 245.7L1392.1 251.1Z" fill="#a24b31"/>
<path d="M1393.8 229.4L1398.8 228.2L1398.8 246.0L1393.8 248.4Z" fill="#1d2024"/>
<path d="M1396.2 229.0L1398.4 228.5L1398.4 236.0L1396.2 236.6Z" fill="#c9b0b0"/>
<path d="M1368.0 230.0L1373.2 231.0L1373.2 236.4L1368.0 235.2Z" fill="#d7bcb8"/>
<path d="M1367.4 221.0L1392.1 226.4L1402.1 223.7" fill="none" stroke="#77787c" stroke-width="0.9"/>
<path d="M1392.1 226.4L1392.1 251.1" fill="none" stroke="#77787c" stroke-width="0.8"/>
<path d="M1376.8 254.4L1445.5 272.4L1444.2 296.8L1376.8 282.5Z" fill="#904a30"/>
<path d="M1376.8 268.0L1444.8 285.0" fill="none" stroke="#7a3c26" stroke-width="0.6"/>
<path d="M1381.4 275.4L1388.4 277.0L1388.4 288.0L1381.4 286.0Z" fill="#d6bdb8"/>
<path d="M1376.8 254.4L1445.5 272.4L1552.0 227.6L1493.5 217.5L1475.2 221.7Z" fill="#888ba6"/>
<path d="M1376.8 254.4L1475.2 221.7L1476.0 226.6L1391.0 255.2L1380.0 257.0Z" fill="#b4573a"/>
<path d="M1475.2 221.7L1493.5 217.5L1494.0 222.4L1477.0 226.4Z" fill="#c4644a"/>
<path d="M1493.5 217.5L1552.0 227.6L1549.0 231.6L1494.0 222.4Z" fill="#c4644a"/>
<path d="M1376.8 254.4L1445.5 272.4L1552.0 227.6L1493.5 217.5L1475.2 221.7L1376.8 254.4" fill="none" stroke="#6e6f73" stroke-width="1.1"/>
<path d="M1407.9 258.7L1495.3 228.4" fill="none" stroke="#5d5f6c" stroke-width="0.7"/>
<path d="M1425.8 263.8L1518.6 230.1" fill="none" stroke="#5d5f6c" stroke-width="0.7"/>
<path d="M1410.8 249.1L1467.7 261.8" fill="none" stroke="#5d5f6c" stroke-width="0.7"/>
<path d="M1428.8 243.0L1489.4 253.5" fill="none" stroke="#5d5f6c" stroke-width="0.7"/>
<path d="M1446.0 237.3L1509.8 245.7" fill="none" stroke="#5d5f6c" stroke-width="0.7"/>
<path d="M1462.4 231.7L1529.0 238.4" fill="none" stroke="#5d5f6c" stroke-width="0.7"/>
<path d="M1445.5 272.4L1552.0 227.6L1550.5 290.0L1445.0 368.0Z" fill="#b4573a"/>
<path d="M1451.9 276.3L1457.5 273.9L1457.4 292.4L1451.8 295.3Z" fill="#23272b"/>
<path d="M1451.8 299.0L1457.4 296.1L1457.2 315.5L1451.7 318.7Z" fill="#23272b"/>
<path d="M1453.1 283.3L1456.2 281.9L1456.2 291.2L1453.1 292.7Z" fill="#a69fa6"/>
<path d="M1453.0 306.8L1456.1 305.1L1456.0 314.4L1452.9 316.1Z" fill="#a69fa6"/>
<path d="M1460.8 272.4L1466.1 270.1L1465.9 288.1L1460.7 290.8Z" fill="#23272b"/>
<path d="M1460.7 294.4L1465.9 291.7L1465.7 310.5L1460.5 313.5Z" fill="#23272b"/>
<path d="M1462.0 279.2L1464.9 277.8L1464.8 286.9L1461.9 288.3Z" fill="#a69fa6"/>
<path d="M1461.8 302.0L1464.7 300.4L1464.6 309.4L1461.7 311.0Z" fill="#a69fa6"/>
<path d="M1469.2 268.7L1474.2 266.5L1474.0 284.0L1469.0 286.5Z" fill="#23272b"/>
<path d="M1469.0 290.1L1473.9 287.5L1473.7 305.8L1468.8 308.7Z" fill="#23272b"/>
<path d="M1470.2 275.3L1473.0 274.0L1472.9 282.8L1470.2 284.2Z" fill="#a69fa6"/>
<path d="M1470.0 297.4L1472.8 295.9L1472.7 304.7L1470.0 306.2Z" fill="#a69fa6"/>
<path d="M1479.9 261.4L1485.9 258.7L1485.4 301.4L1479.4 305.0Z" fill="#23272b"/>
<path d="M1481.3 271.8L1483.6 270.7L1483.5 278.3L1481.2 279.5Z" fill="#9d98a2"/>
<path d="M1481.1 291.4L1483.3 290.1L1483.2 298.5L1481.0 299.8Z" fill="#9d98a2"/>
<path d="M1487.9 257.9L1493.6 255.4L1493.0 296.8L1487.4 300.2Z" fill="#23272b"/>
<path d="M1489.2 268.0L1491.4 267.0L1491.3 274.4L1489.1 275.5Z" fill="#9d98a2"/>
<path d="M1489.0 287.0L1491.1 285.9L1491.0 294.0L1488.9 295.2Z" fill="#9d98a2"/>
<path d="M1495.5 254.6L1500.9 252.3L1500.2 292.5L1494.9 295.7Z" fill="#23272b"/>
<path d="M1496.7 264.5L1498.7 263.5L1498.6 270.7L1496.6 271.7Z" fill="#9d98a2"/>
<path d="M1496.4 282.9L1498.4 281.8L1498.3 289.7L1496.3 290.9Z" fill="#9d98a2"/>
<path d="M1502.6 251.5L1507.7 249.3L1507.0 288.5L1502.0 291.5Z" fill="#23272b"/>
<path d="M1503.7 261.1L1505.6 260.2L1505.5 267.2L1503.6 268.2Z" fill="#9d98a2"/>
<path d="M1503.4 279.1L1505.4 278.0L1505.2 285.7L1503.3 286.8Z" fill="#9d98a2"/>
<path d="M1509.3 248.6L1514.1 246.5L1513.5 284.6L1508.7 287.5Z" fill="#23272b"/>
<path d="M1510.4 258.0L1512.2 257.1L1512.1 263.9L1510.3 264.8Z" fill="#9d98a2"/>
<path d="M1510.1 275.4L1511.9 274.4L1511.8 281.9L1510.0 283.0Z" fill="#9d98a2"/>
<path d="M1515.7 245.8L1520.2 243.9L1519.6 281.0L1515.0 283.7Z" fill="#23272b"/>
<path d="M1516.7 255.0L1518.4 254.2L1518.3 260.8L1516.6 261.6Z" fill="#9d98a2"/>
<path d="M1516.4 272.0L1518.1 271.0L1517.9 278.3L1516.2 279.3Z" fill="#9d98a2"/>
<path d="M1521.7 243.2L1526.0 241.4L1525.3 277.5L1521.0 280.1Z" fill="#23272b"/>
<path d="M1522.6 252.1L1524.3 251.4L1524.1 257.8L1522.5 258.6Z" fill="#9d98a2"/>
<path d="M1522.3 268.7L1524.0 267.8L1523.8 274.9L1522.2 275.9Z" fill="#9d98a2"/>
<path d="M1527.4 240.7L1531.5 239.0L1530.8 274.2L1526.7 276.7Z" fill="#23272b"/>
<path d="M1528.3 249.5L1529.8 248.7L1529.7 255.0L1528.2 255.8Z" fill="#9d98a2"/>
<path d="M1528.0 265.6L1529.5 264.7L1529.4 271.7L1527.8 272.6Z" fill="#9d98a2"/>
<path d="M1532.9 238.4L1536.8 236.7L1536.0 271.1L1532.2 273.5Z" fill="#23272b"/>
<path d="M1533.7 246.9L1535.1 246.2L1535.0 252.3L1533.6 253.1Z" fill="#9d98a2"/>
<path d="M1533.4 262.6L1534.8 261.8L1534.7 268.6L1533.2 269.5Z" fill="#9d98a2"/>
<path d="M1539.8 239.3L1542.3 238.2L1542.0 249.4L1539.6 250.7Z" fill="#23272b"/>
<path d="M1539.5 254.7L1541.9 253.4L1541.7 266.5L1539.2 267.9Z" fill="#23272b"/>
<path d="M1543.6 237.6L1546.0 236.6L1545.7 247.6L1543.4 248.8Z" fill="#23272b"/>
<path d="M1543.3 252.7L1545.6 251.4L1545.3 264.3L1543.0 265.7Z" fill="#23272b"/>
<path d="M1547.3 236.0L1549.6 234.9L1549.3 245.7L1547.0 246.9Z" fill="#23272b"/>
<path d="M1546.9 250.7L1549.2 249.6L1548.9 262.2L1546.6 263.5Z" fill="#23272b"/>
<path d="M1445.2 327.3L1546.2 266.3L1545.6 291.7L1445.0 365.2Z" fill="#23272b"/>
<path d="M1445.2 327.3L1450.1 324.4L1449.8 361.7L1445.0 365.2Z" fill="#b4573a"/>
<path d="M1454.5 321.7L1459.1 318.9L1458.8 355.1L1454.3 358.4Z" fill="#b4573a"/>
<path d="M1463.2 316.4L1467.5 313.8L1467.2 349.0L1462.9 352.1Z" fill="#b4573a"/>
<path d="M1471.5 311.4L1475.5 309.0L1475.1 343.2L1471.1 346.1Z" fill="#b4573a"/>
<path d="M1479.2 306.8L1483.0 304.5L1482.6 337.7L1478.8 340.5Z" fill="#b4573a"/>
<path d="M1486.6 302.3L1490.2 300.2L1489.7 332.5L1486.1 335.2Z" fill="#b4573a"/>
<path d="M1493.5 298.1L1496.9 296.1L1496.4 327.6L1493.0 330.1Z" fill="#b4573a"/>
<path d="M1500.1 294.2L1503.3 292.2L1502.8 323.0L1499.6 325.3Z" fill="#b4573a"/>
<path d="M1506.3 290.4L1509.4 288.6L1508.9 318.6L1505.8 320.8Z" fill="#b4573a"/>
<path d="M1512.2 286.8L1515.1 285.1L1514.6 314.4L1511.7 316.5Z" fill="#b4573a"/>
<path d="M1517.9 283.4L1520.6 281.8L1520.1 310.4L1517.3 312.4Z" fill="#b4573a"/>
<path d="M1523.2 280.2L1525.9 278.6L1525.3 306.5L1522.7 308.5Z" fill="#b4573a"/>
<path d="M1528.3 277.1L1530.9 275.6L1530.3 302.9L1527.8 304.8Z" fill="#b4573a"/>
<path d="M1533.2 274.1L1535.7 272.7L1535.1 299.4L1532.7 301.2Z" fill="#b4573a"/>
<path d="M1537.9 271.3L1540.2 269.9L1539.6 296.1L1537.3 297.8Z" fill="#b4573a"/>
<path d="M1542.4 268.6L1544.6 267.3L1544.0 292.9L1541.8 294.5Z" fill="#b4573a"/>
<path d="M1546.3 265.0L1551.2 262.1L1550.5 290.0L1545.6 293.6Z" fill="#c4644a"/>
<path d="M1493.5 310.0L1503.5 304.0L1503.5 322.0L1493.5 325.0Z" fill="#1c1d20"/>
<path d="M1493.5 323.5L1502.7 322.2L1502.7 329.6L1493.5 330.6Z" fill="#1aa6a6"/>
<path d="M1488.5 333.0L1491.0 332.0L1491.0 338.0L1488.5 339.0Z" fill="#1aa6a6"/>
<path d="M1445.0 367.0L1550.5 289.2" fill="none" stroke="#2a2b2d" stroke-width="2.2"/>
<path d="M1424.2 336.3L1557.6 259.3L1557.6 261.7L1424.2 338.7Z" fill="#e6e6e4"/>
<path d="M1424.2 363.2L1557.6 272.6L1557.6 275.0L1424.2 365.6Z" fill="#e6e6e4"/>
<path d="M1436.8 346.0L1456.8 336.0L1458.0 340.5L1438.5 350.8Z" fill="#1f2124"/>
<path d="M1439.0 345.6L1455.0 337.6L1455.4 339.2L1439.4 347.2Z" fill="#9b9cab"/>
<path d="M1523.4 291.7L1536.7 286.7L1537.6 289.2L1524.2 295.1Z" fill="#1f2124"/>
<path d="M1552.0 238.0L1557.6 240.5L1557.6 286.0L1551.0 290.0Z" fill="#b85c40"/>
<path d="M1445.5 272.4L1445.0 368.0" fill="none" stroke="#7b7c80" stroke-width="1"/>
<path d="M1424.2 306.3L1423.4 384.2" fill="none" stroke="#8b8c90" stroke-width="1.1"/>
<path d="M1283.5 250.0V229.0" stroke="#6c6e72" stroke-width="1.3"/>
<path d="M1281.0 250.0h5" stroke="#6c6e72" stroke-width="1.4"/>
<path d="M1313.0 243.0V223.0" stroke="#6c6e72" stroke-width="1.3"/>
<path d="M1310.5 243.0h5" stroke="#6c6e72" stroke-width="1.4"/>
<path d="M1338.0 240.0V217.5" stroke="#6c6e72" stroke-width="1.3"/>
<path d="M1335.5 240.0h5" stroke="#6c6e72" stroke-width="1.4"/>
<path d="M1362.0 230.0V211.0" stroke="#6c6e72" stroke-width="1.3"/>
<path d="M1359.5 230.0h5" stroke="#6c6e72" stroke-width="1.4"/>
<path d="M1389.5 220.0V205.0" stroke="#6c6e72" stroke-width="1.3"/>
<path d="M1387.0 220.0h5" stroke="#6c6e72" stroke-width="1.4"/>
<path d="M1361.5 273.0V254.0" stroke="#6c6e72" stroke-width="1.3"/>
<path d="M1359.0 273.0h5" stroke="#6c6e72" stroke-width="1.4"/>
<path d="M1413.5 221.0V203.0" stroke="#6c6e72" stroke-width="1.3"/>
<path d="M1411.0 221.0h5" stroke="#6c6e72" stroke-width="1.4"/>
<path d="M1454.0 229.0V212.0" stroke="#6c6e72" stroke-width="1.3"/>
<path d="M1451.5 229.0h5" stroke="#6c6e72" stroke-width="1.4"/>
<path d="M1474.0 231.0V215.0" stroke="#6c6e72" stroke-width="1.3"/>
<path d="M1471.5 231.0h5" stroke="#6c6e72" stroke-width="1.4"/>
<path d="M1494.0 229.0V210.0" stroke="#6c6e72" stroke-width="1.3"/>
<path d="M1491.5 229.0h5" stroke="#6c6e72" stroke-width="1.4"/>
<path d="M1513.0 231.0V213.0" stroke="#6c6e72" stroke-width="1.3"/>
<path d="M1510.5 231.0h5" stroke="#6c6e72" stroke-width="1.4"/>
<path d="M1396.0 243.0V222.0" stroke="#6c6e72" stroke-width="1.3"/>
<path d="M1393.5 243.0h5" stroke="#6c6e72" stroke-width="1.4"/>
<path d="M1428.0 258.0V238.0" stroke="#6c6e72" stroke-width="1.3"/>
<path d="M1425.5 258.0h5" stroke="#6c6e72" stroke-width="1.4"/>
<path d="M1330.0 262.0V236.0" stroke="#6c6e72" stroke-width="1.3"/>
<path d="M1327.5 262.0h5" stroke="#6c6e72" stroke-width="1.4"/>
<rect x="1272.0" y="242.5" width="7.0" height="7.0" fill="#85878b" opacity=".55"/>
<path d="M1272.9 250.0v-7.0" stroke="#6f7175" stroke-width=".9"/>
<path d="M1274.6 250.0v-6.2" stroke="#6f7175" stroke-width=".9"/>
<path d="M1276.4 250.0v-8.4" stroke="#6f7175" stroke-width=".9"/>
<path d="M1278.1 250.0v-5.8" stroke="#6f7175" stroke-width=".9"/>
<path d="M1272.0 244.5h7.0M1272.0 247.5h7.0" stroke="#77797d" stroke-width=".8"/>
<rect x="1284.0" y="245.0" width="6.0" height="5.6" fill="#85878b" opacity=".55"/>
<path d="M1285.0 251.0v-6.3" stroke="#6f7175" stroke-width=".9"/>
<path d="M1287.0 251.0v-5.7" stroke="#6f7175" stroke-width=".9"/>
<path d="M1289.0 251.0v-4.6" stroke="#6f7175" stroke-width=".9"/>
<path d="M1284.0 246.6h6.0M1284.0 249.0h6.0" stroke="#77797d" stroke-width=".8"/>
<rect x="1302.0" y="238.2" width="10.0" height="20.3" fill="#85878b" opacity=".55"/>
<path d="M1302.8 260.0v-22.6" stroke="#6f7175" stroke-width=".9"/>
<path d="M1304.5 260.0v-16.4" stroke="#6f7175" stroke-width=".9"/>
<path d="M1306.2 260.0v-21.6" stroke="#6f7175" stroke-width=".9"/>
<path d="M1307.8 260.0v-16.9" stroke="#6f7175" stroke-width=".9"/>
<path d="M1309.5 260.0v-17.1" stroke="#6f7175" stroke-width=".9"/>
<path d="M1311.2 260.0v-21.5" stroke="#6f7175" stroke-width=".9"/>
<path d="M1302.0 244.1h10.0M1302.0 252.8h10.0" stroke="#77797d" stroke-width=".8"/>
<rect x="1325.0" y="236.2" width="22.0" height="28.7" fill="#85878b" opacity=".55"/>
<path d="M1325.8 267.0v-37.8" stroke="#6f7175" stroke-width=".9"/>
<path d="M1327.5 267.0v-24.8" stroke="#6f7175" stroke-width=".9"/>
<path d="M1329.2 267.0v-26.7" stroke="#6f7175" stroke-width=".9"/>
<path d="M1330.9 267.0v-34.1" stroke="#6f7175" stroke-width=".9"/>
<path d="M1332.6 267.0v-40.0" stroke="#6f7175" stroke-width=".9"/>
<path d="M1334.3 267.0v-33.2" stroke="#6f7175" stroke-width=".9"/>
<path d="M1336.0 267.0v-29.9" stroke="#6f7175" stroke-width=".9"/>
<path d="M1337.7 267.0v-40.6" stroke="#6f7175" stroke-width=".9"/>
<path d="M1339.4 267.0v-23.4" stroke="#6f7175" stroke-width=".9"/>
<path d="M1341.1 267.0v-38.4" stroke="#6f7175" stroke-width=".9"/>
<path d="M1342.8 267.0v-27.9" stroke="#6f7175" stroke-width=".9"/>
<path d="M1344.5 267.0v-25.2" stroke="#6f7175" stroke-width=".9"/>
<path d="M1346.2 267.0v-24.7" stroke="#6f7175" stroke-width=".9"/>
<path d="M1325.0 244.4h22.0M1325.0 256.8h22.0" stroke="#77797d" stroke-width=".8"/>
<rect x="1360.0" y="222.5" width="7.0" height="7.0" fill="#85878b" opacity=".55"/>
<path d="M1360.9 230.0v-6.9" stroke="#6f7175" stroke-width=".9"/>
<path d="M1362.6 230.0v-9.2" stroke="#6f7175" stroke-width=".9"/>
<path d="M1364.4 230.0v-6.3" stroke="#6f7175" stroke-width=".9"/>
<path d="M1366.1 230.0v-8.1" stroke="#6f7175" stroke-width=".9"/>
<path d="M1360.0 224.5h7.0M1360.0 227.5h7.0" stroke="#77797d" stroke-width=".8"/>
<rect x="1354.0" y="257.0" width="6.0" height="8.4" fill="#85878b" opacity=".55"/>
<path d="M1355.0 266.0v-10.1" stroke="#6f7175" stroke-width=".9"/>
<path d="M1357.0 266.0v-8.6" stroke="#6f7175" stroke-width=".9"/>
<path d="M1359.0 266.0v-9.6" stroke="#6f7175" stroke-width=".9"/>
<path d="M1354.0 259.4h6.0M1354.0 263.0h6.0" stroke="#77797d" stroke-width=".8"/>
<rect x="1385.0" y="211.8" width="9.0" height="7.7" fill="#85878b" opacity=".55"/>
<path d="M1385.9 220.0v-6.4" stroke="#6f7175" stroke-width=".9"/>
<path d="M1387.7 220.0v-6.3" stroke="#6f7175" stroke-width=".9"/>
<path d="M1389.5 220.0v-7.1" stroke="#6f7175" stroke-width=".9"/>
<path d="M1391.3 220.0v-9.4" stroke="#6f7175" stroke-width=".9"/>
<path d="M1393.1 220.0v-8.2" stroke="#6f7175" stroke-width=".9"/>
<path d="M1385.0 213.9h9.0M1385.0 217.2h9.0" stroke="#77797d" stroke-width=".8"/>
<rect x="1316.0" y="238.5" width="6.0" height="7.0" fill="#85878b" opacity=".55"/>
<path d="M1317.0 246.0v-6.9" stroke="#6f7175" stroke-width=".9"/>
<path d="M1319.0 246.0v-8.1" stroke="#6f7175" stroke-width=".9"/>
<path d="M1321.0 246.0v-7.5" stroke="#6f7175" stroke-width=".9"/>
<path d="M1316.0 240.5h6.0M1316.0 243.5h6.0" stroke="#77797d" stroke-width=".8"/>
<rect x="1404.0" y="217.0" width="10.0" height="8.4" fill="#85878b" opacity=".55"/>
<path d="M1404.8 226.0v-8.2" stroke="#6f7175" stroke-width=".9"/>
<path d="M1406.5 226.0v-10.9" stroke="#6f7175" stroke-width=".9"/>
<path d="M1408.2 226.0v-10.4" stroke="#6f7175" stroke-width=".9"/>
<path d="M1409.8 226.0v-7.9" stroke="#6f7175" stroke-width=".9"/>
<path d="M1411.5 226.0v-9.7" stroke="#6f7175" stroke-width=".9"/>
<path d="M1413.2 226.0v-9.4" stroke="#6f7175" stroke-width=".9"/>
<path d="M1404.0 219.4h10.0M1404.0 223.0h10.0" stroke="#77797d" stroke-width=".8"/>
<rect x="1420.0" y="219.0" width="12.0" height="8.4" fill="#85878b" opacity=".55"/>
<path d="M1420.9 228.0v-11.3" stroke="#6f7175" stroke-width=".9"/>
<path d="M1422.6 228.0v-10.5" stroke="#6f7175" stroke-width=".9"/>
<path d="M1424.3 228.0v-8.2" stroke="#6f7175" stroke-width=".9"/>
<path d="M1426.0 228.0v-11.9" stroke="#6f7175" stroke-width=".9"/>
<path d="M1427.7 228.0v-7.2" stroke="#6f7175" stroke-width=".9"/>
<path d="M1429.4 228.0v-8.9" stroke="#6f7175" stroke-width=".9"/>
<path d="M1431.1 228.0v-10.7" stroke="#6f7175" stroke-width=".9"/>
<path d="M1420.0 221.4h12.0M1420.0 225.0h12.0" stroke="#77797d" stroke-width=".8"/>
<rect x="1437.0" y="222.0" width="15.0" height="8.4" fill="#85878b" opacity=".55"/>
<path d="M1437.8 231.0v-7.4" stroke="#6f7175" stroke-width=".9"/>
<path d="M1439.5 231.0v-9.2" stroke="#6f7175" stroke-width=".9"/>
<path d="M1441.2 231.0v-6.8" stroke="#6f7175" stroke-width=".9"/>
<path d="M1442.8 231.0v-10.2" stroke="#6f7175" stroke-width=".9"/>
<path d="M1444.5 231.0v-10.7" stroke="#6f7175" stroke-width=".9"/>
<path d="M1446.2 231.0v-9.7" stroke="#6f7175" stroke-width=".9"/>
<path d="M1447.8 231.0v-11.3" stroke="#6f7175" stroke-width=".9"/>
<path d="M1449.5 231.0v-8.3" stroke="#6f7175" stroke-width=".9"/>
<path d="M1451.2 231.0v-10.4" stroke="#6f7175" stroke-width=".9"/>
<path d="M1437.0 224.4h15.0M1437.0 228.0h15.0" stroke="#77797d" stroke-width=".8"/>
<rect x="1412.0" y="250.0" width="12.0" height="11.2" fill="#85878b" opacity=".55"/>
<path d="M1412.9 262.0v-13.1" stroke="#6f7175" stroke-width=".9"/>
<path d="M1414.6 262.0v-13.0" stroke="#6f7175" stroke-width=".9"/>
<path d="M1416.3 262.0v-12.1" stroke="#6f7175" stroke-width=".9"/>
<path d="M1418.0 262.0v-14.8" stroke="#6f7175" stroke-width=".9"/>
<path d="M1419.7 262.0v-15.6" stroke="#6f7175" stroke-width=".9"/>
<path d="M1421.4 262.0v-12.2" stroke="#6f7175" stroke-width=".9"/>
<path d="M1423.1 262.0v-13.6" stroke="#6f7175" stroke-width=".9"/>
<path d="M1412.0 253.2h12.0M1412.0 258.0h12.0" stroke="#77797d" stroke-width=".8"/>
<rect x="1428.0" y="253.5" width="12.0" height="9.8" fill="#85878b" opacity=".55"/>
<path d="M1428.9 264.0v-8.1" stroke="#6f7175" stroke-width=".9"/>
<path d="M1430.6 264.0v-12.1" stroke="#6f7175" stroke-width=".9"/>
<path d="M1432.3 264.0v-11.8" stroke="#6f7175" stroke-width=".9"/>
<path d="M1434.0 264.0v-14.0" stroke="#6f7175" stroke-width=".9"/>
<path d="M1435.7 264.0v-12.9" stroke="#6f7175" stroke-width=".9"/>
<path d="M1437.4 264.0v-9.5" stroke="#6f7175" stroke-width=".9"/>
<path d="M1439.1 264.0v-10.1" stroke="#6f7175" stroke-width=".9"/>
<path d="M1428.0 256.3h12.0M1428.0 260.5h12.0" stroke="#77797d" stroke-width=".8"/>
<rect x="1450.0" y="257.0" width="12.0" height="8.4" fill="#85878b" opacity=".55"/>
<path d="M1450.9 266.0v-10.2" stroke="#6f7175" stroke-width=".9"/>
<path d="M1452.6 266.0v-6.7" stroke="#6f7175" stroke-width=".9"/>
<path d="M1454.3 266.0v-9.1" stroke="#6f7175" stroke-width=".9"/>
<path d="M1456.0 266.0v-7.5" stroke="#6f7175" stroke-width=".9"/>
<path d="M1457.7 266.0v-7.2" stroke="#6f7175" stroke-width=".9"/>
<path d="M1459.4 266.0v-6.9" stroke="#6f7175" stroke-width=".9"/>
<path d="M1461.1 266.0v-10.7" stroke="#6f7175" stroke-width=".9"/>
<path d="M1450.0 259.4h12.0M1450.0 263.0h12.0" stroke="#77797d" stroke-width=".8"/>
<rect x="1488.0" y="230.5" width="12.0" height="7.0" fill="#85878b" opacity=".55"/>
<path d="M1488.9 238.0v-6.1" stroke="#6f7175" stroke-width=".9"/>
<path d="M1490.6 238.0v-6.6" stroke="#6f7175" stroke-width=".9"/>
<path d="M1492.3 238.0v-7.3" stroke="#6f7175" stroke-width=".9"/>
<path d="M1494.0 238.0v-9.4" stroke="#6f7175" stroke-width=".9"/>
<path d="M1495.7 238.0v-5.9" stroke="#6f7175" stroke-width=".9"/>
<path d="M1497.4 238.0v-7.5" stroke="#6f7175" stroke-width=".9"/>
<path d="M1499.1 238.0v-8.0" stroke="#6f7175" stroke-width=".9"/>
<path d="M1488.0 232.5h12.0M1488.0 235.5h12.0" stroke="#77797d" stroke-width=".8"/>
<rect x="1510.0" y="232.5" width="14.0" height="7.0" fill="#85878b" opacity=".55"/>
<path d="M1510.9 240.0v-9.5" stroke="#6f7175" stroke-width=".9"/>
<path d="M1512.6 240.0v-9.2" stroke="#6f7175" stroke-width=".9"/>
<path d="M1514.4 240.0v-9.4" stroke="#6f7175" stroke-width=".9"/>
<path d="M1516.1 240.0v-6.8" stroke="#6f7175" stroke-width=".9"/>
<path d="M1517.9 240.0v-7.4" stroke="#6f7175" stroke-width=".9"/>
<path d="M1519.6 240.0v-7.1" stroke="#6f7175" stroke-width=".9"/>
<path d="M1521.4 240.0v-9.5" stroke="#6f7175" stroke-width=".9"/>
<path d="M1523.1 240.0v-9.8" stroke="#6f7175" stroke-width=".9"/>
<path d="M1510.0 234.5h14.0M1510.0 237.5h14.0" stroke="#77797d" stroke-width=".8"/>
<rect x="1462.0" y="234.5" width="12.0" height="7.0" fill="#85878b" opacity=".55"/>
<path d="M1462.9 242.0v-6.2" stroke="#6f7175" stroke-width=".9"/>
<path d="M1464.6 242.0v-6.3" stroke="#6f7175" stroke-width=".9"/>
<path d="M1466.3 242.0v-6.5" stroke="#6f7175" stroke-width=".9"/>
<path d="M1468.0 242.0v-6.6" stroke="#6f7175" stroke-width=".9"/>
<path d="M1469.7 242.0v-7.7" stroke="#6f7175" stroke-width=".9"/>
<path d="M1471.4 242.0v-8.2" stroke="#6f7175" stroke-width=".9"/>
<path d="M1473.1 242.0v-6.7" stroke="#6f7175" stroke-width=".9"/>
<path d="M1462.0 236.5h12.0M1462.0 239.5h12.0" stroke="#77797d" stroke-width=".8"/>
<rect x="1292.0" y="252.0" width="7.0" height="5.6" fill="#85878b" opacity=".55"/>
<path d="M1292.9 258.0v-4.4" stroke="#6f7175" stroke-width=".9"/>
<path d="M1294.6 258.0v-5.9" stroke="#6f7175" stroke-width=".9"/>
<path d="M1296.4 258.0v-5.7" stroke="#6f7175" stroke-width=".9"/>
<path d="M1298.1 258.0v-6.4" stroke="#6f7175" stroke-width=".9"/>
<path d="M1292.0 253.6h7.0M1292.0 256.0h7.0" stroke="#77797d" stroke-width=".8"/>
<rect x="1262.0" y="247.5" width="6.0" height="4.2" fill="#85878b" opacity=".55"/>
<path d="M1263.0 252.0v-5.9" stroke="#6f7175" stroke-width=".9"/>
<path d="M1265.0 252.0v-5.2" stroke="#6f7175" stroke-width=".9"/>
<path d="M1267.0 252.0v-4.7" stroke="#6f7175" stroke-width=".9"/>
<path d="M1262.0 248.7h6.0M1262.0 250.5h6.0" stroke="#77797d" stroke-width=".8"/>
<path d="M1388.0 258.0L1388.0 267.5" fill="none" stroke="#2020e0" stroke-width="1.1"/>
<path d="M1388.0 267.5L1381.5 269.8" fill="none" stroke="#ff2020" stroke-width="1.1"/>
<path d="M1388.0 267.5L1395.0 268.6" fill="none" stroke="#20d020" stroke-width="1.1"/>
</svg>
<svg style="left:944px;top:37px" width="32" height="32" viewBox="944 37 32 32" fill="none" stroke="#f0f0f0" stroke-width="1.1">
<path d="M951.300 49.500V44.400H956.800M963.200 44.400H968.700V49.500M968.700 56.500V61.600H963.200M956.800 61.600H951.300V56.500"/>
<path d="M960 48.200L964.400 50.600V55.500L960 57.900L955.600 55.500V50.600Z" fill="#e2e2e2" stroke="none"/>
</svg>
<svg style="left:1750px;top:70px" width="110" height="100" viewBox="1750 70 110 100">
<path d="M1764.800 86.200L1802.500 81L1843.800 84.900L1808 93Z" fill="#ffffff" stroke="#707070" stroke-width="1" stroke-linejoin="round"/>
<path d="M1764.800 86.200L1808 93L1807.500 157.300L1769.500 136.300Z" fill="#ffffff" stroke="#707070" stroke-width="1" stroke-linejoin="round"/>
<path d="M1808 93L1843.800 84.900L1839.900 133.200L1807.500 157.300Z" fill="#ffffff" stroke="#707070" stroke-width="1" stroke-linejoin="round"/>
<text transform="translate(1773.500 118.200) rotate(19) skewY(6) scale(.82 1.35)" font-family="Liberation Sans, sans-serif" font-size="9" fill="#7a7a7a">Справа</text>
<text transform="translate(1819 130.500) rotate(-38) skewX(-12) scale(.8 1.5)" font-family="Liberation Sans, sans-serif" font-size="8.500" fill="#7a7a7a">Сзади</text>
</svg>
<svg style="left:944px;top:340px" width="110" height="110" viewBox="944 340 110 110">
<circle cx="994.200" cy="392.600" r="46.300" fill="#a2a2a2"/>
<path d="M993.700 391V370" stroke="#0000f0" stroke-width="1.800"/><path d="M993.700 364.500L996.600 373.500H990.800Z" fill="#0000f0"/>
<path d="M992.500 393.800L978 399.200" stroke="#ff1010" stroke-width="1.700"/><path d="M972.800 401.200L980.200 395.800L981.600 400.800Z" fill="#ff1010"/>
<path d="M996.500 394L1010 397.800" stroke="#10e020" stroke-width="1.700"/><path d="M1018.300 400.200L1008.800 400.800L1010.200 395.200Z" fill="#10e020"/>
<circle cx="994.200" cy="393.200" r="4.300" fill="#909090"/><circle cx="993.400" cy="392.200" r="2.200" fill="#b4b4b4"/>
<text x="993.800" y="358.400" font-family="Liberation Sans, sans-serif" font-size="10.500" font-weight="700" fill="#1010d8">Z</text>
<text x="965" y="404" font-family="Liberation Sans, sans-serif" font-size="10.500" font-weight="700" fill="#f01010">X</text>
<text x="1023.500" y="402.200" font-family="Liberation Sans, sans-serif" font-size="10.500" font-weight="700" fill="#10c820">Y</text>
</svg>

<!-- panel menu icon / close -->
<svg style="left:60px;top:37px" width="876" height="50" viewBox="60 37 876 50" fill="#f4f4f4">
<rect x="71" y="58" width="13" height="2"/><rect x="71" y="62.5" width="13" height="2"/><rect x="71" y="67" width="9" height="2"/>
<path d="M82 66.500L86.600 69.300L82 72.100Z"/>
<path d="M900.600 58.700L913.800 71.900M913.800 58.700L900.600 71.900" stroke="#fafafa" stroke-width="2.1" fill="none"/>
</svg>
<!-- card header triangles -->
<svg style="left:467px;top:102px" width="10" height="5" viewBox="0 0 10 5"><path d="M0 0H10L5 5Z" fill="#e6e6e6"/></svg>
<svg style="left:904px;top:102px" width="10" height="5" viewBox="0 0 10 5"><path d="M0 0H10L5 5Z" fill="#e6e6e6"/></svg>
<svg style="left:904px;top:444px" width="10" height="5" viewBox="0 0 10 5"><path d="M0 0H10L5 5Z" fill="#e6e6e6"/></svg>
<svg style="left:904px;top:715px" width="10" height="5" viewBox="0 0 10 5"><path d="M0 0H10L5 5Z" fill="#e6e6e6"/></svg>
<!-- tree toolbar icons + tree arrows -->
<svg style="left:65px;top:122px" width="419" height="440" viewBox="65 122 419 440" fill="none">
<path d="M74.100 131.200L77.200 128.100L80.300 131.200M74.100 135.300L77.200 138.400L80.300 135.300" stroke="#3c9dbd" stroke-width="1.5"/>
<path d="M458.400 136.400V139H461L468.700 131.300L466.100 128.700ZM469.500 130.500L470.800 129.200C471.100 128.900 471.100 128.500 470.800 128.200L469.200 126.600C468.900 126.300 468.500 126.300 468.200 126.600L466.900 127.900Z" fill="#3393b5"/>
<g fill="#6f6f6f">
<path d="M76 151.600L80.400 155.300L76 159Z"/>
<path d="M76 175.600L80.400 179.300L76 183Z"/>
<path d="M76 199.600L80.400 203.300L76 207Z"/>
<path d="M76 223.600L80.400 227.300L76 231Z"/>
<path d="M76 247.600L80.400 251.300L76 255Z"/>
<path d="M74.600 273.300H81.600L78.100 277.400Z"/>
</g>
<g fill="#2a2a2a"><circle cx="468.200" cy="269.400" r="1.850"/><circle cx="468.200" cy="275.100" r="1.850"/><circle cx="468.200" cy="280.800" r="1.850"/></g>
</svg>
<!-- radios / checkboxes -->
<svg style="left:502px;top:464px" width="419" height="229" viewBox="502 464 419 229" fill="none">
<circle cx="523.700" cy="514.500" r="9" stroke="#2f8fb1" stroke-width="2"/>
<circle cx="523.700" cy="514.500" r="5" fill="#2f8fb1"/>
<circle cx="523.700" cy="550.500" r="9" stroke="#8a8a8a" stroke-width="2"/>
<circle cx="523.700" cy="586.500" r="9" stroke="#8a8a8a" stroke-width="2"/>
<circle cx="523.700" cy="622.500" r="9" stroke="#8a8a8a" stroke-width="2"/>
<rect x="513.700" y="645.700" width="12.800" height="12.800" rx="1.200" stroke="#828282" stroke-width="1.500" fill="#fff"/>
<rect x="513" y="665" width="14.200" height="14.200" rx="1.500" fill="#3a95b5"/>
<path d="M515.600 672.200L518.800 675.400L524.800 668.800" stroke="#fff" stroke-width="1.500"/>
</svg>
<!-- reset icon (card 3) -->
<svg style="left:896px;top:746px" width="20" height="16" viewBox="896 746 20 16" fill="none" stroke="#2e9bc4" stroke-width="1.500" stroke-linecap="round">
<path d="M899.500 748.600L910.700 759.500M898.500 754.600L901.600 757.600M902.400 754.600L905.300 757.600L906.400 756.500M906.600 752.300L908.600 750.400M908.900 754.200L912.600 750.600"/>
</svg>
<!-- collisions header icons -->
<svg style="left:944px;top:504px" width="928px" height="72" viewBox="944 504 928 72" fill="none">
<g fill="#f0f0f0"><rect x="960" y="520" width="13" height="2"/><rect x="960" y="524.500" width="13" height="2"/><rect x="960" y="529" width="9" height="2"/><path d="M971 528.600L975.800 531.400L971 534.200Z"/></g>
<rect x="963.200" y="552.700" width="13.600" height="13.600" rx="2" stroke="#7cbcd6" stroke-width="1.600"/>
<g stroke="#e4e4e4" stroke-width="1.500">
<rect x="1702.700" y="517.800" width="11.200" height="11.200" rx="2"/>
<rect x="1707.800" y="522.600" width="11.200" height="11.200" rx="2"/>
</g>
<g fill="#e4e4e4">
<rect x="1739.300" y="519" width="13.700" height="2"/><rect x="1739.300" y="534" width="13.700" height="2"/>
<rect x="1745.400" y="524.500" width="1.500" height="6"/>
<path d="M1743 525.400L1746.150 522L1749.300 525.400ZM1743 529.600L1746.150 533L1749.300 529.600Z"/>
<rect x="1773.200" y="524.900" width="13.700" height="1.700"/><rect x="1773.200" y="528.100" width="13.700" height="1.700"/>
<rect x="1779.300" y="517.600" width="1.500" height="4"/><rect x="1779.300" y="533" width="1.500" height="3.600"/>
<path d="M1776.900 520.600H1783.200L1780.050 524ZM1776.900 533.800H1783.200L1780.050 530.400Z"/>
<path transform="translate(1803.700 517.200) scale(0.85)" d="M12,15.500A3.500,3.500 0 0,1 8.500,12A3.500,3.500 0 0,1 12,8.500A3.500,3.500 0 0,1 15.500,12A3.500,3.500 0 0,1 12,15.500M19.430,12.970C19.470,12.650 19.500,12.330 19.500,12C19.500,11.670 19.470,11.340 19.430,11L21.540,9.370C21.730,9.220 21.780,8.950 21.660,8.730L19.660,5.270C19.540,5.050 19.270,4.960 19.050,5.050L16.560,6.050C16.040,5.660 15.500,5.320 14.870,5.070L14.500,2.420C14.460,2.180 14.250,2 14,2H10C9.750,2 9.540,2.180 9.500,2.420L9.130,5.070C8.500,5.320 7.960,5.660 7.440,6.050L4.950,5.050C4.730,4.960 4.460,5.050 4.340,5.270L2.340,8.730C2.210,8.950 2.270,9.220 2.460,9.370L4.570,11C4.530,11.340 4.500,11.670 4.500,12C4.500,12.330 4.530,12.650 4.570,12.970L2.460,14.630C2.270,14.780 2.210,15.050 2.340,15.270L4.340,18.730C4.460,18.950 4.730,19.030 4.950,18.950L7.440,17.940C7.960,18.340 8.500,18.680 9.130,18.930L9.500,21.580C9.540,21.820 9.750,22 10,22H14C14.250,22 14.460,21.820 14.500,21.580L14.870,18.930C15.500,18.670 16.040,18.340 16.560,17.940L19.050,18.950C19.270,19.030 19.540,18.950 19.660,18.730L21.660,15.270C21.780,15.050 21.730,14.780 21.540,14.630L19.430,12.970Z"/>
</g>
<path d="M1843.500 525.300L1848 529.800L1852.500 525.300" stroke="#e4e4e4" stroke-width="1.700"/>
</svg>
<span class="t" style="left:1853px;top:553px;width:19px;overflow:hidden;font-size:12px;line-height:12px;font-weight:700;color:#ececec;letter-spacing:-.3px;">UUID</span>
<!-- red annotation arrow -->
<svg style="left:120px;top:530px" width="120" height="120" viewBox="120 530 120 120">
<defs><filter id="sh" x="-30%" y="-30%" width="170%" height="170%"><feGaussianBlur stdDeviation="1.6"/></filter></defs>
<g transform="translate(3.500 3.500)" opacity=".55" filter="url(#sh)"><path d="M214.900 629.600L144 553.400" stroke="#222" stroke-width="3.400"/><path d="M134.800 544.200L150.600 548.600L139.600 559.600Z" fill="#222"/></g>
<path d="M214.900 629.600L144 553.400" stroke="#c00000" stroke-width="3.200"/><path d="M134.800 544.200L150.600 548.600L139.600 559.600Z" fill="#c00000"/>
</svg>

<!-- text -->
<span class="t" id="t0" style="left:477.0px;top:7.00px;font-size:13.5px;line-height:13.5px;color:#e2e2e2;letter-spacing:0.013px;">Базовое пространство</span>
<span class="t" id="t1" style="left:1061.7px;top:4.00px;font-size:18px;line-height:18px;color:#ececec;letter-spacing:0.179px;">Школа</span>
<span class="t" id="t2" style="left:118.2px;top:58.00px;font-size:14.5px;line-height:14.5px;color:#f0f0f0;letter-spacing:1.166px;">Настройки</span>
<span class="t" id="t3" style="left:234.4px;top:58.00px;font-size:14.5px;line-height:14.5px;color:#e0e0e0;letter-spacing:1.092px;">Коллизии</span>
<span class="t" id="t4" style="left:341.8px;top:58.00px;font-size:14.5px;line-height:14.5px;color:#e0e0e0;letter-spacing:1.116px;">Проверки</span>
<span class="t" id="t5" style="left:75.2px;top:97.00px;font-size:14px;line-height:14px;color:#e2e2e2;font-weight:700;letter-spacing:-0.481px;">Дерево правил</span>
<span class="t" id="t6" style="left:512.0px;top:97.00px;font-size:14px;line-height:14px;color:#e2e2e2;font-weight:700;letter-spacing:-0.366px;">Настройка правила</span>
<span class="t" id="t7" style="left:512.4px;top:439.00px;font-size:14px;line-height:14px;color:#e2e2e2;font-weight:700;letter-spacing:-0.386px;">Параметры передачи элементов в подправила</span>
<span class="t" id="t8" style="left:512.2px;top:710.00px;font-size:14px;line-height:14px;color:#e2e2e2;font-weight:700;letter-spacing:-0.292px;">Просмотр элементов</span>
<span class="t" id="t9" style="left:94.5px;top:129.00px;font-size:10px;line-height:10px;color:#3393b5;-webkit-text-stroke:.3px #3393b5;letter-spacing:0.901px;">Развернуть дерево</span>
<span class="t" id="t10" style="left:365.4px;top:129.00px;font-size:10px;line-height:10px;color:#3393b5;-webkit-text-stroke:.3px #3393b5;letter-spacing:0.994px;">Редактировать</span>
<span class="t" id="t11" style="left:87.4px;top:149.00px;font-size:12px;line-height:12px;color:#1f1f1f;font-weight:700;">1</span>
<span class="t" id="t12" style="left:87.4px;top:173.00px;font-size:12px;line-height:12px;color:#1f1f1f;font-weight:700;letter-spacing:-0.235px;">Тест экспорт 5 коллизий без папки</span>
<span class="t" id="t13" style="left:87.4px;top:197.00px;font-size:12px;line-height:12px;color:#1f1f1f;font-weight:700;letter-spacing:-0.322px;">Тест экспорта правил</span>
<span class="t" id="t14" style="left:87.4px;top:221.00px;font-size:12px;line-height:12px;color:#1f1f1f;font-weight:700;letter-spacing:-0.448px;">Группа коллизий</span>
<span class="t" id="t15" style="left:87.4px;top:245.00px;font-size:12px;line-height:12px;color:#1f1f1f;font-weight:700;letter-spacing:-0.445px;">Группа проверок</span>
<span class="t" id="t16" style="left:87.4px;top:269.00px;font-size:12px;line-height:12px;color:#1f1f1f;font-weight:700;letter-spacing:-0.303px;">для презентации</span>
<span class="t" id="t17" style="left:97.1px;top:293.00px;font-size:12px;line-height:12px;color:#262626;letter-spacing:-0.032px;">ОВ-ВК (трубы) допуск 10</span>
<span class="t" id="t18" style="left:97.1px;top:317.00px;font-size:12px;line-height:12px;color:#262626;letter-spacing:-0.086px;">ОВ-ВК зазор 20</span>
<span class="t" id="t19" style="left:97.1px;top:341.00px;font-size:12px;line-height:12px;color:#262626;letter-spacing:-0.148px;">ОВ-ВК (трубы)</span>
<span class="t" id="t20" style="left:97.1px;top:365.00px;font-size:12px;line-height:12px;color:#262626;letter-spacing:-0.058px;">тест</span>
<span class="t" id="t21" style="left:97.1px;top:389.00px;font-size:12px;line-height:12px;color:#262626;letter-spacing:0.046px;">ОВ-ВК (трубы) допуск 10мм (брак)</span>
<span class="t" id="t22" style="left:97.1px;top:413.00px;font-size:12px;line-height:12px;color:#262626;letter-spacing:-0.192px;">ОВ-ОВ допуск 10</span>
<span class="t" id="t23" style="left:97.1px;top:437.00px;font-size:12px;line-height:12px;color:#262626;letter-spacing:-0.045px;">ОВ-ВК (трубы) зазор 20</span>
<span class="t" id="t24" style="left:97.1px;top:461.00px;font-size:12px;line-height:12px;color:#262626;letter-spacing:-0.076px;">ОВ-ВК допуск 10</span>
<span class="t" id="t25" style="left:97.1px;top:485.00px;font-size:12px;line-height:12px;color:#262626;letter-spacing:-0.167px;">ОВ-ВК (трубы)_угол_тест</span>
<span class="t" id="t26" style="left:97.1px;top:509.00px;font-size:12px;line-height:12px;color:#262626;letter-spacing:-0.017px;">ОВ-ВК (трубы) зазор 20 (брак)</span>
<span class="t" id="t27" style="left:97.1px;top:533.00px;font-size:12px;line-height:12px;color:#9e9e9e;font-weight:700;letter-spacing:-0.429px;">подгруппа</span>
<span class="t" id="t28" style="left:633.2px;top:148.00px;font-size:16px;line-height:16px;color:#262626;letter-spacing:0.041px;">Правило не выбрано</span>
<span class="t" id="t29" style="left:523.9px;top:191.00px;font-size:14px;line-height:14px;color:#3d8fb0;letter-spacing:0.125px;">Выберите существующее правило, либо создайте новое</span>
<span class="t" id="t30" style="left:514.4px;top:476.00px;font-size:14px;line-height:14px;color:#1f1f1f;letter-spacing:0.118px;">Параметры</span>
<span class="t" id="t31" style="left:546.1px;top:509.00px;font-size:12px;line-height:12px;color:#2a2a2a;letter-spacing:0.161px;">Без фильтрации</span>
<span class="t" id="t32" style="left:546.1px;top:545.00px;font-size:12px;line-height:12px;color:#2a2a2a;letter-spacing:0.288px;">Все элементы выборки</span>
<span class="t" id="t33" style="left:546.1px;top:581.00px;font-size:12px;line-height:12px;color:#2a2a2a;letter-spacing:0.248px;">Элементы, которые прошли проверку</span>
<span class="t" id="t34" style="left:546.1px;top:617.00px;font-size:12px;line-height:12px;color:#2a2a2a;letter-spacing:0.240px;">Элементы, которые не прошли проверку</span>
<span class="t" id="t35" style="left:538.4px;top:646.00px;font-size:12px;line-height:12px;color:#2a2a2a;letter-spacing:0.381px;">Только элементы потомки</span>
<span class="t" id="t36" style="left:538.4px;top:666.00px;font-size:12px;line-height:12px;color:#2a2a2a;letter-spacing:0.188px;">Сохранять замечания</span>
<span class="t" id="t37" style="left:510.5px;top:748.00px;font-size:12px;line-height:12px;color:#262626;letter-spacing:0.014px;">Всего элементов: 0</span>
<span class="t" id="t38" style="left:815.8px;top:750.00px;font-size:10px;line-height:10px;color:#3393b5;-webkit-text-stroke:.3px #3393b5;letter-spacing:0.842px;">Сбросить всё</span>
<span class="t" id="t39" style="left:992.4px;top:520.00px;font-size:14px;line-height:14px;color:#e6e6e6;letter-spacing:0.169px;">Коллизии (количество: 0)</span>
<span class="t" id="t40" style="left:1020.2px;top:553.00px;font-size:12px;line-height:12px;color:#ececec;font-weight:700;letter-spacing:-0.291px;">Раздел</span>
<span class="t" id="t41" style="left:1267.1px;top:553.00px;font-size:12px;line-height:12px;color:#ececec;font-weight:700;letter-spacing:-0.188px;">Элемент (Модель А)</span>
<span class="t" id="t42" style="left:1705.0px;top:553.00px;font-size:12px;line-height:12px;color:#ececec;font-weight:700;letter-spacing:-0.272px;">Элемент (Модель В)</span>
</div>
</body>
</html>
